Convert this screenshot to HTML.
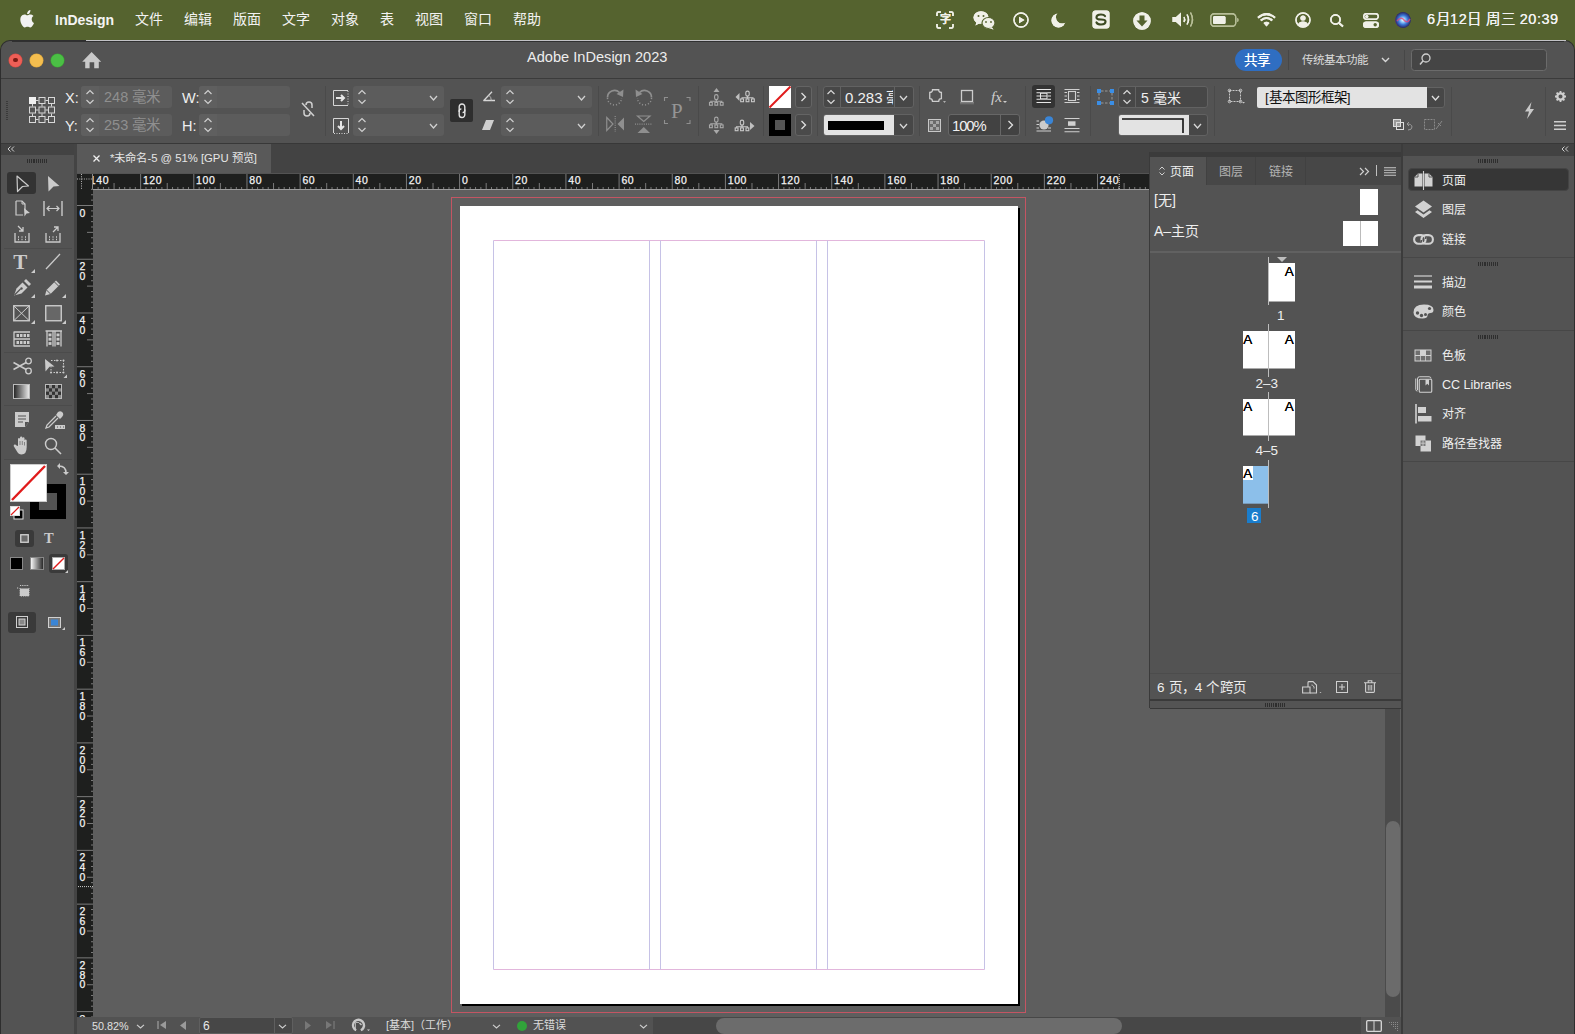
<!DOCTYPE html><html lang="zh-CN"><head><meta charset="utf-8"><style>
*{margin:0;padding:0;box-sizing:border-box}
html,body{width:1575px;height:1034px;overflow:hidden;background:#55632f;font-family:"Liberation Sans",sans-serif;color:#e8e8e8}
svg{overflow:visible}
</style></head><body>
<div style="position:absolute;left:0px;top:0px;width:1575px;height:41px;background:#55632f"></div>
<svg style="position:absolute;left:20px;top:10px;" width="15" height="17" viewBox="0 0 15 17"><path d="M12.3 9.1c0-2.2 1.8-3.3 1.9-3.3-1-1.5-2.6-1.7-3.2-1.7-1.4-.1-2.7.8-3.3.8-.7 0-1.7-.8-2.9-.8C3.3 4.1 1.9 5 1.1 6.4c-1.6 2.8-.4 6.9 1.1 9.1.8 1.1 1.7 2.3 2.8 2.3 1.1 0 1.6-.7 2.9-.7 1.3 0 1.7.7 2.9.7 1.2 0 2-1.1 2.7-2.2.9-1.2 1.2-2.4 1.2-2.5 0 0-2.4-.9-2.4-3.9zM10.1 2.5c.6-.8 1-1.8.9-2.9-.9 0-2 .6-2.6 1.4-.6.7-1.1 1.7-.9 2.8 1 .1 2-.5 2.6-1.3z" fill="#f2f2f2" transform="translate(0,0.5) scale(0.95)"/></svg>
<div style="position:absolute;left:55px;top:13px;font-size:14px;line-height:14px;color:#f4f4f4;font-weight:bold;white-space:nowrap;">InDesign</div>
<div style="position:absolute;left:135px;top:12px;font-size:14px;line-height:14px;color:#f2f2f2;font-weight:normal;white-space:nowrap;">文件</div>
<div style="position:absolute;left:184px;top:12px;font-size:14px;line-height:14px;color:#f2f2f2;font-weight:normal;white-space:nowrap;">编辑</div>
<div style="position:absolute;left:233px;top:12px;font-size:14px;line-height:14px;color:#f2f2f2;font-weight:normal;white-space:nowrap;">版面</div>
<div style="position:absolute;left:282px;top:12px;font-size:14px;line-height:14px;color:#f2f2f2;font-weight:normal;white-space:nowrap;">文字</div>
<div style="position:absolute;left:331px;top:12px;font-size:14px;line-height:14px;color:#f2f2f2;font-weight:normal;white-space:nowrap;">对象</div>
<div style="position:absolute;left:380px;top:12px;font-size:14px;line-height:14px;color:#f2f2f2;font-weight:normal;white-space:nowrap;">表</div>
<div style="position:absolute;left:415px;top:12px;font-size:14px;line-height:14px;color:#f2f2f2;font-weight:normal;white-space:nowrap;">视图</div>
<div style="position:absolute;left:464px;top:12px;font-size:14px;line-height:14px;color:#f2f2f2;font-weight:normal;white-space:nowrap;">窗口</div>
<div style="position:absolute;left:513px;top:12px;font-size:14px;line-height:14px;color:#f2f2f2;font-weight:normal;white-space:nowrap;">帮助</div>
<div style="position:absolute;left:1427px;top:12px;font-size:14.5px;line-height:14.5px;color:#f2f2f2;font-weight:normal;white-space:nowrap;letter-spacing:0.5px">6月12日 周三 20:39</div>
<svg style="position:absolute;left:936px;top:11px;" width="18" height="18" viewBox="0 0 18 18"><path d="M1 5 V2.5 Q1 1 2.5 1 H5 M13 1 H15.5 Q17 1 17 2.5 V5 M17 13 V15.5 Q17 17 15.5 17 H13 M5 17 H2.5 Q1 17 1 15.5 V13" stroke="#f0f0e8" stroke-width="1.5" fill="none"/></svg>
<div style="position:absolute;left:939.5px;top:13.5px;font-size:11px;line-height:11px;color:#f0f0e8;font-weight:bold;white-space:nowrap;">字</div>
<svg style="position:absolute;left:973px;top:10px;" width="23" height="20" viewBox="0 0 23 20"><ellipse cx="8" cy="7.5" rx="7.5" ry="6.3" fill="#f0f0e8"/><path d="M3.5 12 L2.5 15.5 L7 13 Z" fill="#f0f0e8"/><ellipse cx="15.5" cy="13" rx="6.5" ry="5.5" fill="#f0f0e8" stroke="#55632f" stroke-width="1.2"/><path d="M18.5 17 L20.5 19.5 L15.5 18 Z" fill="#f0f0e8"/><circle cx="5.5" cy="6" r="1" fill="#55632f"/><circle cx="10.5" cy="6" r="1" fill="#55632f"/><circle cx="13" cy="12" r="0.9" fill="#55632f"/><circle cx="18" cy="12" r="0.9" fill="#55632f"/></svg>
<svg style="position:absolute;left:1013px;top:12px;" width="16" height="16" viewBox="0 0 16 16"><circle cx="8" cy="8" r="7" stroke="#f0f0e8" stroke-width="1.4" fill="none"/><path d="M6 4.8 L11.5 8 L6 11.2 Z" fill="#f0f0e8"/></svg>
<svg style="position:absolute;left:1051px;top:13px;" width="16" height="15" viewBox="0 0 16 15"><defs><mask id="mm"><rect x="-2" y="-2" width="20" height="20" fill="#fff"/><circle cx="11.2" cy="4.2" r="6.3" fill="#000"/></mask></defs><circle cx="7.5" cy="7.5" r="7" fill="#f0f0e8" mask="url(#mm)"/></svg>
<svg style="position:absolute;left:1092px;top:10px;" width="18" height="19" viewBox="0 0 18 19"><rect x="0.5" y="0.5" width="17" height="18" rx="3" fill="#f0f0e8"/><path d="M13 6 Q12 4.5 9 4.5 Q4.5 4.5 4.5 7.5 Q4.5 9.5 9 9.5 Q13.5 9.5 13.5 11.5 Q13.5 14.5 9 14.5 Q5.5 14.5 4.5 12.5" stroke="#3c4a22" stroke-width="2.2" fill="none" stroke-linecap="round"/></svg>
<svg style="position:absolute;left:1133px;top:12px;" width="18" height="18" viewBox="0 0 18 18"><circle cx="9" cy="9" r="8.7" fill="#f0f0e8"/><path d="M6.5 3.5 H11.5 V8.5 H14.5 L9 14.5 L3.5 8.5 H6.5 Z" fill="#55632f"/></svg>
<svg style="position:absolute;left:1172px;top:12px;" width="22" height="15" viewBox="0 0 22 15"><path d="M0.5 5 H4 L9 0.5 V14.5 L4 10 H0.5 Z" fill="#f0f0e8"/><path d="M12 5 Q13.5 7.5 12 10" stroke="#f0f0e8" stroke-width="1.4" fill="none"/><path d="M15 2.5 Q18 7.5 15 12.5" stroke="#f0f0e8" stroke-width="1.4" fill="none"/><path d="M18.5 0.5 Q22.5 7.5 18.5 14.5" stroke="#b9bf98" stroke-width="1.3" fill="none"/></svg>
<svg style="position:absolute;left:1210px;top:13px;" width="29" height="14" viewBox="0 0 29 14"><rect x="0.75" y="0.75" width="25" height="12.5" rx="3.5" stroke="#b7be98" stroke-width="1.3" fill="none"/><rect x="3" y="3" width="12.5" height="8" rx="1.5" fill="#f0f0e8"/><path d="M27.3 5 Q28.5 5 28.5 7 Q28.5 9 27.3 9 Z" fill="#b7be98"/></svg>
<svg style="position:absolute;left:1257px;top:13px;" width="19" height="14" viewBox="0 0 19 14"><path d="M9.5 13.5 L6.5 10 Q9.5 7.5 12.5 10 Z" fill="#f0f0e8"/><path d="M3.8 7.6 Q9.5 2.5 15.2 7.6" stroke="#f0f0e8" stroke-width="2" fill="none"/><path d="M1 4.7 Q9.5 -2.5 18 4.7" stroke="#f0f0e8" stroke-width="2" fill="none"/></svg>
<svg style="position:absolute;left:1295px;top:12px;" width="16" height="16" viewBox="0 0 16 16"><circle cx="8" cy="8" r="7" stroke="#f0f0e8" stroke-width="1.4" fill="none"/><circle cx="8" cy="6" r="2.6" fill="#f0f0e8"/><path d="M3 12.5 Q4 9.5 8 9.5 Q12 9.5 13 12.5 Q11 14.5 8 14.5 Q5 14.5 3 12.5 Z" fill="#f0f0e8"/></svg>
<svg style="position:absolute;left:1330px;top:14px;" width="14" height="13" viewBox="0 0 14 13"><circle cx="5.5" cy="5.5" r="4.6" stroke="#f0f0e8" stroke-width="1.6" fill="none"/><path d="M9 9 L13 12.5" stroke="#f0f0e8" stroke-width="1.8"/></svg>
<svg style="position:absolute;left:1363px;top:13px;" width="16" height="15" viewBox="0 0 16 15"><rect x="0.75" y="0.75" width="14.5" height="5.5" rx="2.75" stroke="#f0f0e8" stroke-width="1.3" fill="none"/><circle cx="3.8" cy="3.5" r="1.6" fill="#f0f0e8"/><rect x="0" y="8.5" width="16" height="6.5" rx="3.25" fill="#f0f0e8"/><circle cx="12.2" cy="11.75" r="1.7" fill="#55632f"/></svg>
<svg style="position:absolute;left:1395px;top:12px;" width="16" height="16" viewBox="0 0 16 16"><defs><radialGradient id="siri" cx="0.5" cy="0.5" r="0.5"><stop offset="0" stop-color="#ffffff"/><stop offset="0.25" stop-color="#9fd4ff"/><stop offset="0.6" stop-color="#3a78d8"/><stop offset="1" stop-color="#2a2a6a"/></radialGradient><radialGradient id="siri2" cx="0.2" cy="0.6" r="0.5"><stop offset="0" stop-color="#ff3a8a" stop-opacity="0.9"/><stop offset="1" stop-color="#ff3a8a" stop-opacity="0"/></radialGradient></defs><circle cx="8" cy="8" r="7.7" fill="url(#siri)"/><circle cx="8" cy="8" r="7.7" fill="url(#siri2)"/></svg>
<div style="position:absolute;left:1427px;top:12px;font-size:14.5px;line-height:14.5px;color:#f2f2f2;font-weight:normal;white-space:nowrap;letter-spacing:0.5px">6月12日 周三 20:39</div>
<svg style="position:absolute;left:936px;top:11px;" width="18" height="18" viewBox="0 0 18 18"><path d="M1 5 V2.5 Q1 1 2.5 1 H5 M13 1 H15.5 Q17 1 17 2.5 V5 M17 13 V15.5 Q17 17 15.5 17 H13 M5 17 H2.5 Q1 17 1 15.5 V13" stroke="#f0f0e8" stroke-width="1.5" fill="none"/></svg>
<div style="position:absolute;left:939.5px;top:13.5px;font-size:11px;line-height:11px;color:#f0f0e8;font-weight:bold;white-space:nowrap;">字</div>
<svg style="position:absolute;left:973px;top:10px;" width="23" height="20" viewBox="0 0 23 20"><ellipse cx="8" cy="7.5" rx="7.5" ry="6.3" fill="#f0f0e8"/><path d="M3.5 12 L2.5 15.5 L7 13 Z" fill="#f0f0e8"/><ellipse cx="15.5" cy="13" rx="6.5" ry="5.5" fill="#f0f0e8" stroke="#55632f" stroke-width="1.2"/><path d="M18.5 17 L20.5 19.5 L15.5 18 Z" fill="#f0f0e8"/><circle cx="5.5" cy="6" r="1" fill="#55632f"/><circle cx="10.5" cy="6" r="1" fill="#55632f"/><circle cx="13" cy="12" r="0.9" fill="#55632f"/><circle cx="18" cy="12" r="0.9" fill="#55632f"/></svg>
<svg style="position:absolute;left:1013px;top:12px;" width="16" height="16" viewBox="0 0 16 16"><circle cx="8" cy="8" r="7" stroke="#f0f0e8" stroke-width="1.4" fill="none"/><path d="M6 4.8 L11.5 8 L6 11.2 Z" fill="#f0f0e8"/></svg>
<svg style="position:absolute;left:1051px;top:13px;" width="16" height="15" viewBox="0 0 16 15"><defs><mask id="mm"><rect x="-2" y="-2" width="20" height="20" fill="#fff"/><circle cx="11.2" cy="4.2" r="6.3" fill="#000"/></mask></defs><circle cx="7.5" cy="7.5" r="7" fill="#f0f0e8" mask="url(#mm)"/></svg>
<svg style="position:absolute;left:1092px;top:10px;" width="18" height="19" viewBox="0 0 18 19"><rect x="0.5" y="0.5" width="17" height="18" rx="3" fill="#f0f0e8"/><path d="M13 6 Q12 4.5 9 4.5 Q4.5 4.5 4.5 7.5 Q4.5 9.5 9 9.5 Q13.5 9.5 13.5 11.5 Q13.5 14.5 9 14.5 Q5.5 14.5 4.5 12.5" stroke="#3c4a22" stroke-width="2.2" fill="none" stroke-linecap="round"/></svg>
<svg style="position:absolute;left:1133px;top:12px;" width="18" height="18" viewBox="0 0 18 18"><circle cx="9" cy="9" r="8.7" fill="#f0f0e8"/><path d="M6.5 3.5 H11.5 V8.5 H14.5 L9 14.5 L3.5 8.5 H6.5 Z" fill="#55632f"/></svg>
<svg style="position:absolute;left:1172px;top:12px;" width="22" height="15" viewBox="0 0 22 15"><path d="M0.5 5 H4 L9 0.5 V14.5 L4 10 H0.5 Z" fill="#f0f0e8"/><path d="M12 5 Q13.5 7.5 12 10" stroke="#f0f0e8" stroke-width="1.4" fill="none"/><path d="M15 2.5 Q18 7.5 15 12.5" stroke="#f0f0e8" stroke-width="1.4" fill="none"/><path d="M18.5 0.5 Q22.5 7.5 18.5 14.5" stroke="#b9bf98" stroke-width="1.3" fill="none"/></svg>
<svg style="position:absolute;left:1210px;top:13px;" width="29" height="14" viewBox="0 0 29 14"><rect x="0.75" y="0.75" width="25" height="12.5" rx="3.5" stroke="#b7be98" stroke-width="1.3" fill="none"/><rect x="3" y="3" width="12.5" height="8" rx="1.5" fill="#f0f0e8"/><path d="M27.3 5 Q28.5 5 28.5 7 Q28.5 9 27.3 9 Z" fill="#b7be98"/></svg>
<svg style="position:absolute;left:1257px;top:13px;" width="19" height="14" viewBox="0 0 19 14"><path d="M9.5 13.5 L6.5 10 Q9.5 7.5 12.5 10 Z" fill="#f0f0e8"/><path d="M3.8 7.6 Q9.5 2.5 15.2 7.6" stroke="#f0f0e8" stroke-width="2" fill="none"/><path d="M1 4.7 Q9.5 -2.5 18 4.7" stroke="#f0f0e8" stroke-width="2" fill="none"/></svg>
<svg style="position:absolute;left:1295px;top:12px;" width="16" height="16" viewBox="0 0 16 16"><circle cx="8" cy="8" r="7" stroke="#f0f0e8" stroke-width="1.4" fill="none"/><circle cx="8" cy="6" r="2.6" fill="#f0f0e8"/><path d="M3 12.5 Q4 9.5 8 9.5 Q12 9.5 13 12.5 Q11 14.5 8 14.5 Q5 14.5 3 12.5 Z" fill="#f0f0e8"/></svg>
<svg style="position:absolute;left:1330px;top:14px;" width="14" height="13" viewBox="0 0 14 13"><circle cx="5.5" cy="5.5" r="4.6" stroke="#f0f0e8" stroke-width="1.6" fill="none"/><path d="M9 9 L13 12.5" stroke="#f0f0e8" stroke-width="1.8"/></svg>
<svg style="position:absolute;left:1363px;top:13px;" width="16" height="15" viewBox="0 0 16 15"><rect x="0.75" y="0.75" width="14.5" height="5.5" rx="2.75" stroke="#f0f0e8" stroke-width="1.3" fill="none"/><circle cx="3.8" cy="3.5" r="1.6" fill="#f0f0e8"/><rect x="0" y="8.5" width="16" height="6.5" rx="3.25" fill="#f0f0e8"/><circle cx="12.2" cy="11.75" r="1.7" fill="#55632f"/></svg>
<svg style="position:absolute;left:1395px;top:12px;" width="16" height="16" viewBox="0 0 16 16"><defs><radialGradient id="siri" cx="0.55" cy="0.45" r="0.6"><stop offset="0" stop-color="#e8f0ff"/><stop offset="0.35" stop-color="#5a8de0"/><stop offset="0.7" stop-color="#8a3a9a"/><stop offset="1" stop-color="#3a2a5a"/></radialGradient></defs><circle cx="8" cy="8" r="7.7" fill="url(#siri)"/><path d="M2 9 Q6 4 9 8 Q12 12 15 7" stroke="#e04a7a" stroke-width="1.5" fill="none" opacity="0.8"/></svg>
<div style="position:absolute;left:1px;top:41px;width:1573px;height:993px;background:#535353;border-radius:9px 9px 0 0;box-shadow:0 0 0 1px #2e2e2e"></div>
<div style="position:absolute;left:86px;top:40px;width:1480px;height:1px;background:#c2c2c6"></div>
<div style="position:absolute;left:12px;top:41px;width:1552px;height:1px;background:#303030"></div>
<div style="position:absolute;left:1px;top:78px;width:1573px;height:2px;background:#3b3b3b"></div>
<div style="position:absolute;left:9.2px;top:53.5px;width:13px;height:13px;background:#ee5f57;border-radius:50%;box-shadow:0 0 0 0.5px #d24b43"></div>
<div style="position:absolute;left:30.0px;top:53.5px;width:13px;height:13px;background:#f4be4f;border-radius:50%;box-shadow:0 0 0 0.5px #d9a33a"></div>
<div style="position:absolute;left:50.5px;top:53.5px;width:13px;height:13px;background:#4bbf45;border-radius:50%;box-shadow:0 0 0 0.5px #3aa433"></div>
<div style="position:absolute;left:13.3px;top:57.6px;width:4.8px;height:4.8px;background:#7a1a14;border-radius:50%"></div>
<svg style="position:absolute;left:82px;top:51px;" width="20" height="18" viewBox="0 0 20 18"><path d="M9.6 1 L19.2 10.8 L16.8 10.8 L16.8 17.2 L12.2 17.2 L12.2 11.2 L7.6 11.2 L7.6 17.2 L3.2 17.2 L3.2 10.8 L0.2 10.8 Z" fill="#c9c9c9"/></svg>
<div style="position:absolute;left:527px;top:50px;font-size:14.6px;line-height:14.6px;color:#ededed;font-weight:normal;white-space:nowrap;">Adobe InDesign 2023</div>
<div style="position:absolute;left:1235px;top:49px;width:47px;height:22px;background:#2f6ec2;border-radius:11px"></div>
<div style="position:absolute;left:1244px;top:54px;font-size:13.5px;line-height:13.5px;color:#ffffff;font-weight:normal;white-space:nowrap;text-shadow:0 0 0.4px #fff">共享</div>
<div style="position:absolute;left:1288px;top:50px;width:1px;height:20px;background:#474747"></div>
<div style="position:absolute;left:1302px;top:55px;font-size:11.5px;line-height:11.5px;color:#dadada;font-weight:normal;white-space:nowrap;">传统基本功能</div>
<svg style="position:absolute;left:1381px;top:57px;" width="9" height="6" viewBox="0 0 9 6"><path d="M1 1 L4.5 4.5 L8 1" stroke="#d8d8d8" stroke-width="1.4" fill="none"/></svg>
<div style="position:absolute;left:1404px;top:50px;width:1px;height:20px;background:#474747"></div>
<div style="position:absolute;left:1411px;top:49px;width:136px;height:22px;background:#454545;border:1.5px solid #6b6b6b;border-radius:3.5px"></div>
<svg style="position:absolute;left:1419px;top:53px;" width="12" height="13" viewBox="0 0 12 13"><circle cx="7" cy="5" r="4" stroke="#cfcfcf" stroke-width="1.3" fill="none"/><path d="M4.2 7.8 L1 11.5" stroke="#cfcfcf" stroke-width="1.5"/></svg>
<div style="position:absolute;left:1px;top:79px;width:1573px;height:64px;background:#535353"></div>
<div style="position:absolute;left:1px;top:143px;width:1573px;height:1px;background:#383838"></div>
<div style="position:absolute;left:6px;top:100.5px;width:2px;height:1px;background:#3a3a3a"></div>
<div style="position:absolute;left:6px;top:102.5px;width:2px;height:1px;background:#3a3a3a"></div>
<div style="position:absolute;left:6px;top:104.5px;width:2px;height:1px;background:#3a3a3a"></div>
<div style="position:absolute;left:6px;top:106.5px;width:2px;height:1px;background:#3a3a3a"></div>
<div style="position:absolute;left:6px;top:108.5px;width:2px;height:1px;background:#3a3a3a"></div>
<div style="position:absolute;left:6px;top:110.5px;width:2px;height:1px;background:#3a3a3a"></div>
<div style="position:absolute;left:6px;top:112.5px;width:2px;height:1px;background:#3a3a3a"></div>
<div style="position:absolute;left:6px;top:114.5px;width:2px;height:1px;background:#3a3a3a"></div>
<div style="position:absolute;left:6px;top:116.5px;width:2px;height:1px;background:#3a3a3a"></div>
<div style="position:absolute;left:6px;top:118.5px;width:2px;height:1px;background:#3a3a3a"></div>
<svg style="position:absolute;left:28px;top:96px;" width="28" height="28" viewBox="0 0 28 28"><rect x="1.0" y="1.0" width="7" height="7" fill="#f0f0f0"/><rect x="11.0" y="1.5" width="6" height="6" fill="none" stroke="#d8d8d8" stroke-width="1"/><rect x="20.5" y="1.5" width="6" height="6" fill="none" stroke="#d8d8d8" stroke-width="1"/><rect x="1.5" y="11.0" width="6" height="6" fill="none" stroke="#d8d8d8" stroke-width="1"/><rect x="11.0" y="11.0" width="6" height="6" fill="none" stroke="#d8d8d8" stroke-width="1"/><rect x="20.5" y="11.0" width="6" height="6" fill="none" stroke="#d8d8d8" stroke-width="1"/><rect x="1.5" y="20.5" width="6" height="6" fill="none" stroke="#d8d8d8" stroke-width="1"/><rect x="11.0" y="20.5" width="6" height="6" fill="none" stroke="#d8d8d8" stroke-width="1"/><rect x="20.5" y="20.5" width="6" height="6" fill="none" stroke="#d8d8d8" stroke-width="1"/><path d="M8 4.5 L10.5 4.5 M17.5 4.5 L20 4.5" stroke="#d8d8d8"/><path d="M8 14.0 L10.5 14.0 M17.5 14.0 L20 14.0" stroke="#d8d8d8"/><path d="M8 23.5 L10.5 23.5 M17.5 23.5 L20 23.5" stroke="#d8d8d8"/><path d="M4.5 8 L4.5 10.5 M4.5 17.5 L4.5 20" stroke="#d8d8d8"/><path d="M14.0 8 L14.0 10.5 M14.0 17.5 L14.0 20" stroke="#d8d8d8"/><path d="M23.5 8 L23.5 10.5 M23.5 17.5 L23.5 20" stroke="#d8d8d8"/></svg>
<div style="position:absolute;left:65px;top:91px;font-size:14.5px;line-height:14.5px;color:#efefef;font-weight:normal;white-space:nowrap;">X:</div>
<div style="position:absolute;left:65px;top:119px;font-size:14.5px;line-height:14.5px;color:#efefef;font-weight:normal;white-space:nowrap;">Y:</div>
<div style="position:absolute;left:182px;top:91px;font-size:14.5px;line-height:14.5px;color:#efefef;font-weight:normal;white-space:nowrap;">W:</div>
<div style="position:absolute;left:182px;top:119px;font-size:14.5px;line-height:14.5px;color:#efefef;font-weight:normal;white-space:nowrap;">H:</div>
<div style="position:absolute;left:81px;top:86px;width:91px;height:22px;background:#5c5c5c;border-radius:3px"></div>
<div style="position:absolute;left:81px;top:86px;width:18px;height:22px;background:#5f5f5f;border-radius:3px 0 0 3px"></div>
<svg style="position:absolute;left:85px;top:88px;" width="10" height="18" viewBox="0 0 10 18"><path d="M1.5 6 L5 2.5 L8.5 6 M1.5 12 L5 15.5 L8.5 12" stroke="#cfcfcf" stroke-width="1.2" fill="none"/></svg>
<div style="position:absolute;left:81px;top:114px;width:91px;height:22px;background:#5c5c5c;border-radius:3px"></div>
<div style="position:absolute;left:81px;top:114px;width:18px;height:22px;background:#5f5f5f;border-radius:3px 0 0 3px"></div>
<svg style="position:absolute;left:85px;top:116px;" width="10" height="18" viewBox="0 0 10 18"><path d="M1.5 6 L5 2.5 L8.5 6 M1.5 12 L5 15.5 L8.5 12" stroke="#cfcfcf" stroke-width="1.2" fill="none"/></svg>
<div style="position:absolute;left:104px;top:90px;font-size:14.5px;line-height:14.5px;color:#8f8f8f;font-weight:normal;white-space:nowrap;">248 毫米</div>
<div style="position:absolute;left:104px;top:118px;font-size:14.5px;line-height:14.5px;color:#8f8f8f;font-weight:normal;white-space:nowrap;">253 毫米</div>
<div style="position:absolute;left:199px;top:86px;width:91px;height:22px;background:#5c5c5c;border-radius:3px"></div>
<div style="position:absolute;left:199px;top:86px;width:18px;height:22px;background:#5f5f5f;border-radius:3px 0 0 3px"></div>
<svg style="position:absolute;left:203px;top:88px;" width="10" height="18" viewBox="0 0 10 18"><path d="M1.5 6 L5 2.5 L8.5 6 M1.5 12 L5 15.5 L8.5 12" stroke="#cfcfcf" stroke-width="1.2" fill="none"/></svg>
<div style="position:absolute;left:199px;top:114px;width:91px;height:22px;background:#5c5c5c;border-radius:3px"></div>
<div style="position:absolute;left:199px;top:114px;width:18px;height:22px;background:#5f5f5f;border-radius:3px 0 0 3px"></div>
<svg style="position:absolute;left:203px;top:116px;" width="10" height="18" viewBox="0 0 10 18"><path d="M1.5 6 L5 2.5 L8.5 6 M1.5 12 L5 15.5 L8.5 12" stroke="#cfcfcf" stroke-width="1.2" fill="none"/></svg>
<svg style="position:absolute;left:301px;top:101px;" width="14" height="16" viewBox="0 0 14 16"><path d="M5 4 Q5 1 8 1 Q11 1 11 4 L11 7 M3 9 L3 12 Q3 15 6 15 Q9 15 9 12" stroke="#d0d0d0" stroke-width="1.5" fill="none"/><path d="M1 2 L13 15" stroke="#d0d0d0" stroke-width="1.5"/></svg>
<div style="position:absolute;left:325px;top:86px;width:1px;height:50px;background:#4a4a4a"></div>
<svg style="position:absolute;left:333px;top:90px;" width="16" height="16" viewBox="0 0 16 16"><path d="M0.5 0.5 H15 M0.5 0.5 V15.5 H15" stroke="#d6d6d6" fill="none"/><path d="M15 1 V15" stroke="#d6d6d6" stroke-dasharray="1 1.5"/><path d="M3 8 H10 M8 5 L11 8 L8 11" stroke="#e6e6e6" stroke-width="2" fill="none"/></svg>
<svg style="position:absolute;left:333px;top:118px;" width="16" height="16" viewBox="0 0 16 16"><path d="M0.5 15 V0.5 H15.5 V15 M0.5 15" stroke="#d6d6d6" fill="none"/><path d="M1 15.5 H15" stroke="#d6d6d6" stroke-dasharray="1 1.5"/><path d="M8 3 V10 M5 8 L8 11 L11 8" stroke="#e6e6e6" stroke-width="2" fill="none"/></svg>
<div style="position:absolute;left:353px;top:86px;width:91px;height:22px;background:#5c5c5c;border-radius:3px"></div>
<svg style="position:absolute;left:357px;top:88px;" width="10" height="18" viewBox="0 0 10 18"><path d="M1.5 6 L5 2.5 L8.5 6 M1.5 12 L5 15.5 L8.5 12" stroke="#cfcfcf" stroke-width="1.2" fill="none"/></svg>
<svg style="position:absolute;left:429px;top:95px;" width="9" height="6" viewBox="0 0 9 6"><path d="M1 1 L4.5 5 L8 1" stroke="#d0d0d0" stroke-width="1.3" fill="none"/></svg>
<div style="position:absolute;left:353px;top:114px;width:91px;height:22px;background:#5c5c5c;border-radius:3px"></div>
<svg style="position:absolute;left:357px;top:116px;" width="10" height="18" viewBox="0 0 10 18"><path d="M1.5 6 L5 2.5 L8.5 6 M1.5 12 L5 15.5 L8.5 12" stroke="#cfcfcf" stroke-width="1.2" fill="none"/></svg>
<svg style="position:absolute;left:429px;top:123px;" width="9" height="6" viewBox="0 0 9 6"><path d="M1 1 L4.5 5 L8 1" stroke="#d0d0d0" stroke-width="1.3" fill="none"/></svg>
<div style="position:absolute;left:450px;top:99px;width:23px;height:23px;background:#2e2e2e;border-radius:2px"></div>
<svg style="position:absolute;left:457.5px;top:103px;" width="9" height="16" viewBox="0 0 9 16"><path d="M1.2 9 V3.8 A2.8 2.8 0 0 1 6.8 3.8 V7.5 Q6.8 9.3 4.6 9.6" stroke="#e4e4e4" stroke-width="1.4" fill="none"/><path d="M6.8 6.5 V11.7 A2.8 2.8 0 0 1 1.2 11.7 V8 Q1.2 6.2 3.4 5.9" stroke="#e4e4e4" stroke-width="1.4" fill="none"/></svg>
<svg style="position:absolute;left:483px;top:91px;" width="13" height="11" viewBox="0 0 13 11"><path d="M9 0.8 L0.8 9.5 H12" stroke="#d6d6d6" stroke-width="1.3" fill="none" stroke-linejoin="round"/><path d="M5.8 4.2 Q8.3 6 8.3 9.5" stroke="#bdbdbd" stroke-width="0.9" fill="none"/></svg>
<svg style="position:absolute;left:482px;top:120px;" width="12" height="10" viewBox="0 0 12 10"><path d="M4 0 L12 0 L8 10 L0 10 Z" fill="#cfcfcf"/></svg>
<div style="position:absolute;left:501px;top:86px;width:91px;height:22px;background:#5c5c5c;border-radius:3px"></div>
<svg style="position:absolute;left:505px;top:88px;" width="10" height="18" viewBox="0 0 10 18"><path d="M1.5 6 L5 2.5 L8.5 6 M1.5 12 L5 15.5 L8.5 12" stroke="#cfcfcf" stroke-width="1.2" fill="none"/></svg>
<svg style="position:absolute;left:577px;top:95px;" width="9" height="6" viewBox="0 0 9 6"><path d="M1 1 L4.5 5 L8 1" stroke="#d0d0d0" stroke-width="1.3" fill="none"/></svg>
<div style="position:absolute;left:501px;top:114px;width:91px;height:22px;background:#5c5c5c;border-radius:3px"></div>
<svg style="position:absolute;left:505px;top:116px;" width="10" height="18" viewBox="0 0 10 18"><path d="M1.5 6 L5 2.5 L8.5 6 M1.5 12 L5 15.5 L8.5 12" stroke="#cfcfcf" stroke-width="1.2" fill="none"/></svg>
<svg style="position:absolute;left:577px;top:123px;" width="9" height="6" viewBox="0 0 9 6"><path d="M1 1 L4.5 5 L8 1" stroke="#d0d0d0" stroke-width="1.3" fill="none"/></svg>
<div style="position:absolute;left:598px;top:86px;width:1px;height:50px;background:#4a4a4a"></div>
<svg style="position:absolute;left:606px;top:88px;" width="18" height="17" viewBox="0 0 18 17"><path d="M1.5 9.5 A7 7 0 0 1 13.5 4.5" stroke="#8f8f8f" stroke-width="1.7" fill="none"/><path d="M1.5 10 A7 7 0 0 0 15.5 10" stroke="#8f8f8f" stroke-width="1.5" fill="none" stroke-dasharray="1.1 2"/><path d="M17.5 1.5 L17 9 L10.5 6 Z" fill="#8f8f8f"/></svg>
<svg style="position:absolute;left:635px;top:88px;" width="18" height="17" viewBox="0 0 18 17"><path d="M16.5 9.5 A7 7 0 0 0 4.5 4.5" stroke="#8f8f8f" stroke-width="1.7" fill="none"/><path d="M16.5 10 A7 7 0 0 1 2.5 10" stroke="#8f8f8f" stroke-width="1.5" fill="none" stroke-dasharray="1.1 2"/><path d="M0.5 1.5 L1 9 L7.5 6 Z" fill="#8f8f8f"/></svg>
<svg style="position:absolute;left:606px;top:116px;" width="19" height="16" viewBox="0 0 19 16"><path d="M0.75 1.5 L7 8 L0.75 14.5 Z" stroke="#8f8f8f" stroke-width="1.2" fill="none"/><path d="M18 1.5 L11.5 8 L18 14.5 Z" fill="#8f8f8f"/><path d="M9.2 0 V16" stroke="#8f8f8f" stroke-width="1.2" stroke-dasharray="1 1.2"/></svg>
<svg style="position:absolute;left:635px;top:115px;" width="17" height="19" viewBox="0 0 17 19"><path d="M2.5 1 H15 L8.75 6.5 Z" stroke="#8f8f8f" stroke-width="1.2" fill="none"/><path d="M2.5 18 H15 L8.75 12 Z" fill="#8f8f8f"/><path d="M0 9.2 H17" stroke="#8f8f8f" stroke-width="1.2" stroke-dasharray="1 1.2"/></svg>
<svg style="position:absolute;left:664px;top:97px;" width="27" height="27" viewBox="0 0 27 27"><path d="M0.5 4 V0.5 H4 M22.5 0.5 H26 V4 M0.5 23 V26.5 H4 M22.5 26.5 H26 V23" stroke="#8f8f8f" stroke-width="1.1" fill="none"/></svg>
<div style="position:absolute;left:671px;top:101px;font-size:21px;line-height:21px;color:#959595;font-weight:normal;white-space:nowrap;font-family:'Liberation Serif',serif">P</div>
<div style="position:absolute;left:698px;top:86px;width:1px;height:50px;background:#4a4a4a"></div>
<svg style="position:absolute;left:709px;top:87px;" width="15" height="19" viewBox="0 0 15 19"><path d="M4.5 5 L7.5 1 L10.5 5 Z" fill="#a9a9a9"/><rect x="5.6" y="7.6" width="3.4" height="5" rx="1.7" stroke="#a9a9a9" stroke-width="1.1" fill="none"/><path d="M7.3 12.6 V14.3 M1.8 15.3 V14.3 H12.8 V15.3 M7.3 14.3 V15.3" stroke="#a9a9a9" stroke-width="1.1" fill="none"/><rect x="0.5" y="15.4" width="2.8" height="2.8" stroke="#a9a9a9" stroke-width="1.1" fill="none"/><rect x="5.8999999999999995" y="15.4" width="2.8" height="2.8" stroke="#a9a9a9" stroke-width="1.1" fill="none"/><rect x="11.3" y="15.4" width="2.8" height="2.8" stroke="#a9a9a9" stroke-width="1.1" fill="none"/></svg>
<svg style="position:absolute;left:735px;top:90px;" width="20" height="13" viewBox="0 0 20 13"><path d="M4.5 3 L0.5 7 L4.5 11 Z" fill="#c0c0c0"/><rect x="10.8" y="1.1" width="3.4" height="5" rx="1.7" stroke="#c8c8c8" stroke-width="1.1" fill="none"/><path d="M12.5 6.1 V7.8 M7.0 8.8 V7.8 H18.0 V8.8 M12.5 7.8 V8.8" stroke="#c8c8c8" stroke-width="1.1" fill="none"/><rect x="5.7" y="8.9" width="2.8" height="2.8" stroke="#c8c8c8" stroke-width="1.1" fill="none"/><rect x="11.1" y="8.9" width="2.8" height="2.8" stroke="#c8c8c8" stroke-width="1.1" fill="none"/><rect x="16.5" y="8.9" width="2.8" height="2.8" stroke="#c8c8c8" stroke-width="1.1" fill="none"/></svg>
<svg style="position:absolute;left:709px;top:116px;" width="15" height="19" viewBox="0 0 15 19"><rect x="5.6" y="1.1" width="3.4" height="5" rx="1.7" stroke="#a9a9a9" stroke-width="1.1" fill="none"/><path d="M7.3 6.1 V7.8 M1.8 8.8 V7.8 H12.8 V8.8 M7.3 7.8 V8.8" stroke="#a9a9a9" stroke-width="1.1" fill="none"/><rect x="0.5" y="8.9" width="2.8" height="2.8" stroke="#a9a9a9" stroke-width="1.1" fill="none"/><rect x="5.8999999999999995" y="8.9" width="2.8" height="2.8" stroke="#a9a9a9" stroke-width="1.1" fill="none"/><rect x="11.3" y="8.9" width="2.8" height="2.8" stroke="#a9a9a9" stroke-width="1.1" fill="none"/><path d="M4.5 14 L7.5 18 L10.5 14 Z" fill="#a9a9a9"/></svg>
<svg style="position:absolute;left:735px;top:119px;" width="20" height="13" viewBox="0 0 20 13"><rect x="5.3" y="1.1" width="3.4" height="5" rx="1.7" stroke="#c8c8c8" stroke-width="1.1" fill="none"/><path d="M7 6.1 V7.8 M1.5 8.8 V7.8 H12.5 V8.8 M7 7.8 V8.8" stroke="#c8c8c8" stroke-width="1.1" fill="none"/><rect x="0.2" y="8.9" width="2.8" height="2.8" stroke="#c8c8c8" stroke-width="1.1" fill="none"/><rect x="5.6" y="8.9" width="2.8" height="2.8" stroke="#c8c8c8" stroke-width="1.1" fill="none"/><rect x="11" y="8.9" width="2.8" height="2.8" stroke="#c8c8c8" stroke-width="1.1" fill="none"/><path d="M15 3 L19.5 7 L15 11 Z" fill="#c0c0c0"/></svg>
<div style="position:absolute;left:763px;top:86px;width:1px;height:50px;background:#4a4a4a"></div>
<svg style="position:absolute;left:769px;top:86px;" width="22" height="22" viewBox="0 0 22 22"><rect x="0" y="0" width="22" height="22" fill="#ffffff"/><path d="M0.5 21.5 L21.5 0.5" stroke="#e01b1b" stroke-width="2"/></svg>
<div style="position:absolute;left:795px;top:86px;width:17px;height:22px;background:#4a4a4a;border:1px solid #646464;border-radius:3px"></div>
<svg style="position:absolute;left:800px;top:92px;" width="7" height="10" viewBox="0 0 7 10"><path d="M1.5 1 L5.5 5 L1.5 9" stroke="#e0e0e0" stroke-width="1.3" fill="none"/></svg>
<svg style="position:absolute;left:769px;top:114px;" width="22" height="22" viewBox="0 0 22 22"><rect x="0" y="0" width="22" height="22" fill="#000"/><rect x="6" y="6" width="10" height="10" fill="#555"/></svg>
<div style="position:absolute;left:795px;top:114px;width:17px;height:22px;background:#4a4a4a;border:1px solid #646464;border-radius:3px"></div>
<svg style="position:absolute;left:800px;top:120px;" width="7" height="10" viewBox="0 0 7 10"><path d="M1.5 1 L5.5 5 L1.5 9" stroke="#e0e0e0" stroke-width="1.3" fill="none"/></svg>
<div style="position:absolute;left:817px;top:86px;width:1px;height:50px;background:#4a4a4a"></div>
<div style="position:absolute;left:823px;top:86px;width:91px;height:22px;background:#474747;border:1px solid #626262;border-radius:3px"></div>
<div style="position:absolute;left:840px;top:87px;width:1px;height:20px;background:#626262"></div>
<div style="position:absolute;left:894px;top:87px;width:1px;height:20px;background:#626262"></div>
<svg style="position:absolute;left:826px;top:88px;" width="10" height="18" viewBox="0 0 10 18"><path d="M1.5 6 L5 2.5 L8.5 6 M1.5 12 L5 15.5 L8.5 12" stroke="#d8d8d8" stroke-width="1.2" fill="none"/></svg>
<div style="position:absolute;left:845px;top:90px;font-size:15px;line-height:15px;color:#f0f0f0;font-weight:normal;white-space:nowrap;width:48px;overflow:hidden">0.283<span style='margin-left:3px'>毫</span></div>
<svg style="position:absolute;left:899px;top:95px;" width="9" height="6" viewBox="0 0 9 6"><path d="M1 1 L4.5 5 L8 1" stroke="#d8d8d8" stroke-width="1.3" fill="none"/></svg>
<div style="position:absolute;left:823px;top:114px;width:91px;height:22px;background:#474747;border:1px solid #626262;border-radius:3px"></div>
<div style="position:absolute;left:824px;top:115px;width:70px;height:20px;background:#e3e3e3;border-radius:2px 0 0 2px"></div>
<div style="position:absolute;left:828px;top:121px;width:56px;height:9px;background:#000"></div>
<svg style="position:absolute;left:899px;top:123px;" width="9" height="6" viewBox="0 0 9 6"><path d="M1 1 L4.5 5 L8 1" stroke="#d8d8d8" stroke-width="1.3" fill="none"/></svg>
<div style="position:absolute;left:919px;top:86px;width:1px;height:50px;background:#4a4a4a"></div>
<svg style="position:absolute;left:929px;top:89px;" width="18" height="15" viewBox="0 0 18 15"><path d="M3.5 0.75 H9.7 Q9.7 3.5 12.4 3.5 V9.7 Q9.7 9.7 9.7 12.4 H3.5 Q3.5 9.7 0.75 9.7 V3.5 Q3.5 3.5 3.5 0.75 Z" stroke="#cdcdcd" stroke-width="1.3" fill="none"/><path d="M14 12.3 L17 12.3 L15.5 13.8 Z" fill="#cdcdcd"/></svg>
<svg style="position:absolute;left:960px;top:89px;" width="14" height="17" viewBox="0 0 14 17"><defs><linearGradient id="shd" x1="0" y1="0" x2="0" y2="1"><stop offset="0" stop-color="#888"/><stop offset="1" stop-color="#535353"/></linearGradient></defs><rect x="1.5" y="1.5" width="11" height="11" stroke="#cdcdcd" stroke-width="1.3" fill="none"/><rect x="0" y="13" width="14" height="3" fill="url(#shd)"/></svg>
<div style="position:absolute;left:991px;top:88.5px;font-size:15.5px;line-height:15.5px;color:#cdcdcd;font-weight:normal;white-space:nowrap;font-family:'Liberation Serif',serif"><i>fx</i></div>
<svg style="position:absolute;left:1003px;top:101px;" width="4" height="3" viewBox="0 0 4 3"><path d="M0 0 L4 0 L2 2 Z" fill="#cdcdcd"/></svg>
<svg style="position:absolute;left:928px;top:118.5px;" width="13" height="13" viewBox="0 0 13 13"><rect x="0.5" y="0.5" width="12" height="12" stroke="#c8c8c8" fill="#6a6a6a"/><rect x="2" y="2" width="3" height="3" fill="#a5a5a5"/><rect x="8" y="2" width="3" height="3" fill="#a5a5a5"/><rect x="5" y="5" width="3" height="3" fill="#a5a5a5"/><rect x="2" y="8" width="3" height="3" fill="#a5a5a5"/><rect x="8" y="8" width="3" height="3" fill="#a5a5a5"/></svg>
<div style="position:absolute;left:947.5px;top:114px;width:72px;height:22px;background:#424242;border:1px solid #676767;border-radius:3px"></div>
<div style="position:absolute;left:1000px;top:115px;width:1px;height:20px;background:#676767"></div>
<div style="position:absolute;left:952px;top:118.5px;font-size:14.8px;line-height:14.8px;color:#f0f0f0;font-weight:normal;white-space:nowrap;letter-spacing:-1.1px">100%</div>
<svg style="position:absolute;left:1007px;top:120px;" width="7" height="10" viewBox="0 0 7 10"><path d="M1.5 1 L5.5 5 L1.5 9" stroke="#e0e0e0" stroke-width="1.3" fill="none"/></svg>
<div style="position:absolute;left:1025px;top:86px;width:1px;height:50px;background:#4a4a4a"></div>
<div style="position:absolute;left:1032px;top:85px;width:23px;height:23px;background:#333;border-radius:3px"></div>
<svg style="position:absolute;left:1036px;top:88px;" width="16" height="17" viewBox="0 0 16 17"><path d="M0.5 1.5 H15 M0.5 4.8 H15 M0.5 8 H15 M0.5 11.3 H15 M0.5 14.5 H15" stroke="#e6e6e6" stroke-width="1.1"/><rect x="4" y="4.8" width="7.5" height="6.5" fill="#333"/><rect x="4.5" y="5.3" width="6.5" height="5.5" fill="none" stroke="#e6e6e6" stroke-width="1"/><path d="M4.5 8 H11" stroke="#e6e6e6"/></svg>
<svg style="position:absolute;left:1064px;top:88px;" width="16" height="17" viewBox="0 0 16 17"><path d="M0.5 1.5 H15.5 M0.5 14.5 H15.5" stroke="#d0d0d0" stroke-width="1.1"/><path d="M0.5 4.5 H3 M0.5 8 H3 M0.5 11.5 H3 M13 4.5 H15.5 M13 8 H15.5 M13 11.5 H15.5" stroke="#d0d0d0" stroke-width="1.1"/><rect x="4.5" y="3.5" width="7" height="9" fill="none" stroke="#d0d0d0" stroke-width="1.1"/></svg>
<svg style="position:absolute;left:1036px;top:115px;" width="18" height="18" viewBox="0 0 18 18"><path d="M0.5 16 H15 M0.5 6 H3 M0.5 9.5 H3 M0.5 13 H3 M12 13 H15" stroke="#d0d0d0" stroke-width="1.1"/><circle cx="8" cy="10" r="4.6" fill="#cbcbcb"/><circle cx="13" cy="5.3" r="4.1" fill="#3a85d6"/></svg>
<svg style="position:absolute;left:1064px;top:117px;" width="16" height="16" viewBox="0 0 16 16"><path d="M0.5 1.5 H15.5 M0.5 11.5 H15.5 M0.5 14.8 H15.5" stroke="#d0d0d0" stroke-width="1.1"/><rect x="4" y="4.3" width="7.5" height="4.5" fill="#d0d0d0"/></svg>
<div style="position:absolute;left:1090px;top:86px;width:1px;height:50px;background:#4a4a4a"></div>
<svg style="position:absolute;left:1097px;top:89px;" width="17" height="16" viewBox="0 0 17 16"><rect x="0" y="0" width="4" height="4" fill="#3a8ee6"/><rect x="13" y="0" width="4" height="4" fill="#3a8ee6"/><rect x="0" y="12" width="4" height="4" fill="#3a8ee6"/><rect x="13" y="12" width="4" height="4" fill="#3a8ee6"/><path d="M4 2 H13 M4 14 H13 M2 4 V12 M15 4 V12" stroke="#9a9a9a" stroke-dasharray="2.5 1.5"/></svg>
<div style="position:absolute;left:1118px;top:86px;width:90px;height:22px;background:#474747;border:1px solid #626262;border-radius:3px"></div>
<div style="position:absolute;left:1135px;top:87px;width:1px;height:20px;background:#626262"></div>
<svg style="position:absolute;left:1122px;top:88px;" width="10" height="18" viewBox="0 0 10 18"><path d="M1.5 6 L5 2.5 L8.5 6 M1.5 12 L5 15.5 L8.5 12" stroke="#d8d8d8" stroke-width="1.2" fill="none"/></svg>
<div style="position:absolute;left:1141px;top:90.5px;font-size:14px;line-height:14px;color:#f0f0f0;font-weight:normal;white-space:nowrap;">5 毫米</div>
<div style="position:absolute;left:1118px;top:114px;width:90px;height:22px;background:#474747;border:1px solid #626262;border-radius:3px"></div>
<div style="position:absolute;left:1119px;top:115px;width:70px;height:20px;background:#e3e3e3;border-radius:2px 0 0 2px"></div>
<svg style="position:absolute;left:1121px;top:117px;" width="60" height="17" viewBox="0 0 60 17"><path d="M1 2 H62 V16" stroke="#111" stroke-width="1.6" fill="none"/></svg>
<svg style="position:absolute;left:1193px;top:123px;" width="9" height="6" viewBox="0 0 9 6"><path d="M1 1 L4.5 5 L8 1" stroke="#d8d8d8" stroke-width="1.3" fill="none"/></svg>
<div style="position:absolute;left:1214px;top:86px;width:1px;height:50px;background:#4a4a4a"></div>
<svg style="position:absolute;left:1228px;top:89px;" width="17" height="15" viewBox="0 0 17 15"><rect x="1.5" y="1.5" width="11" height="11" fill="none" stroke="#c9c9c9" stroke-dasharray="2 1"/><circle cx="1.5" cy="1.5" r="1.3" fill="none" stroke="#c9c9c9"/><circle cx="12.5" cy="1.5" r="1.3" fill="none" stroke="#c9c9c9"/><circle cx="1.5" cy="12.5" r="1.3" fill="none" stroke="#c9c9c9"/><circle cx="12.5" cy="12.5" r="1.3" fill="none" stroke="#c9c9c9"/><path d="M14 13 L17 13 L15.5 14.5 Z" fill="#c9c9c9"/></svg>
<div style="position:absolute;left:1257px;top:87px;width:188px;height:21px;background:#474747;border:1px solid #626262;border-radius:3px"></div>
<div style="position:absolute;left:1257px;top:87px;width:170px;height:21px;background:#e3e3e3;border-radius:2px 0 0 2px"></div>
<div style="position:absolute;left:1265px;top:91px;font-size:13.5px;line-height:13.5px;color:#111;font-weight:normal;white-space:nowrap;">[基本图形框架]</div>
<svg style="position:absolute;left:1431px;top:95px;" width="9" height="6" viewBox="0 0 9 6"><path d="M1 1 L4.5 5 L8 1" stroke="#e0e0e0" stroke-width="1.3" fill="none"/></svg>
<svg style="position:absolute;left:1393px;top:119px;" width="22" height="12" viewBox="0 0 22 12"><rect x="0.5" y="0.5" width="7" height="7" fill="#9a9a9a" stroke="#ddd"/><rect x="3.5" y="3.5" width="7" height="7" fill="none" stroke="#ddd"/><path d="M14 5 Q19 5 19 8 Q19 11 15 11 M14 5 L16 3 M14 5 L16 7" stroke="#9a9a9a" fill="none"/></svg>
<svg style="position:absolute;left:1424px;top:119px;" width="19" height="12" viewBox="0 0 19 12"><rect x="0.5" y="0.5" width="10" height="10" fill="none" stroke="#8a8a8a" stroke-dasharray="2 1"/><path d="M12 10 L18 2 M14 4 L17 7" stroke="#8a8a8a"/></svg>
<div style="position:absolute;left:1451px;top:87px;width:1px;height:49px;background:#4a4a4a"></div>
<svg style="position:absolute;left:1524px;top:102px;" width="11" height="17" viewBox="0 0 11 17"><path d="M7.5 0 L1 9.5 L5 9.5 L3 17 L10 7 L6 7 Z" fill="#c9c9c9"/></svg>
<div style="position:absolute;left:1545px;top:87px;width:1px;height:49px;background:#4a4a4a"></div>
<svg style="position:absolute;left:1555px;top:91px;" width="11" height="11" viewBox="0 0 11 11"><circle cx="5.5" cy="5.5" r="3.2" fill="none" stroke="#cfcfcf" stroke-width="2.3"/><path d="M5.5 0 V2 M5.5 9 V11 M0 5.5 H2 M9 5.5 H11 M1.6 1.6 L3 3 M8 8 L9.4 9.4 M1.6 9.4 L3 8 M8 3 L9.4 1.6" stroke="#cfcfcf" stroke-width="1.8"/></svg>
<svg style="position:absolute;left:1554px;top:121px;" width="12" height="9" viewBox="0 0 12 9"><path d="M0 0.75 H12 M0 4.5 H12 M0 8.25 H12" stroke="#cfcfcf" stroke-width="1.3"/></svg>
<div style="position:absolute;left:1px;top:144px;width:73px;height:890px;background:#535353"></div>
<div style="position:absolute;left:1px;top:144px;width:73px;height:11px;background:#434343"></div>
<div style="position:absolute;left:74px;top:144px;width:3px;height:890px;background:#444444"></div>
<svg style="position:absolute;left:7px;top:146px;" width="8" height="6" viewBox="0 0 8 6"><path d="M3.5 0.5 L1 3 L3.5 5.5 M7 0.5 L4.5 3 L7 5.5" stroke="#cfcfcf" fill="none"/></svg>
<div style="position:absolute;left:27.0px;top:159px;width:1px;height:4px;background:#2e2e2e"></div>
<div style="position:absolute;left:28.85px;top:159px;width:1px;height:4px;background:#2e2e2e"></div>
<div style="position:absolute;left:30.7px;top:159px;width:1px;height:4px;background:#2e2e2e"></div>
<div style="position:absolute;left:32.55px;top:159px;width:1px;height:4px;background:#2e2e2e"></div>
<div style="position:absolute;left:34.4px;top:159px;width:1px;height:4px;background:#2e2e2e"></div>
<div style="position:absolute;left:36.25px;top:159px;width:1px;height:4px;background:#2e2e2e"></div>
<div style="position:absolute;left:38.1px;top:159px;width:1px;height:4px;background:#2e2e2e"></div>
<div style="position:absolute;left:39.95px;top:159px;width:1px;height:4px;background:#2e2e2e"></div>
<div style="position:absolute;left:41.8px;top:159px;width:1px;height:4px;background:#2e2e2e"></div>
<div style="position:absolute;left:43.650000000000006px;top:159px;width:1px;height:4px;background:#2e2e2e"></div>
<div style="position:absolute;left:45.5px;top:159px;width:1px;height:4px;background:#2e2e2e"></div>
<div style="position:absolute;left:7px;top:172px;width:29px;height:22px;background:#333;border-radius:3px"></div>
<svg style="position:absolute;left:16px;top:175px;" width="14" height="18" viewBox="0 0 14 18"><path d="M1 1 L12.5 11 L6.5 11.5 L1.5 16.5 Z" stroke="#cbcbcb" stroke-width="1.2" fill="none" stroke-linejoin="round"/></svg>
<svg style="position:absolute;left:47px;top:175px;" width="14" height="18" viewBox="0 0 14 18"><path d="M1 1 L12.5 11 L6.5 11.5 L1.5 16.5 Z" fill="#cbcbcb"/></svg>
<svg style="position:absolute;left:15px;top:200px;" width="16" height="17" viewBox="0 0 16 17"><path d="M1 1 H7 L10 4 V10 M1 1 V15 H8" stroke="#cbcbcb" stroke-width="1.2" fill="none"/><path d="M7 1 V4 H10" stroke="#cbcbcb" fill="none"/><path d="M9 8 L15 13 L11.5 13.5 L9.5 16.5 Z" fill="#cbcbcb"/></svg>
<svg style="position:absolute;left:43px;top:201px;" width="20" height="15" viewBox="0 0 20 15"><path d="M1 0 V15 M19 0 V15" stroke="#cbcbcb" stroke-width="1.4"/><path d="M4 7.5 H16 M6.5 5 L4 7.5 L6.5 10 M13.5 5 L16 7.5 L13.5 10" stroke="#cbcbcb" stroke-width="1.2" fill="none"/></svg>
<svg style="position:absolute;left:14px;top:225px;" width="16" height="18" viewBox="0 0 16 18"><path d="M1 8 V17 H15 V8" stroke="#cbcbcb" stroke-width="1.3" fill="none"/><path d="M4 12 H5 M7.5 12 H8.5 M11 12 H12 M4 14.5 H5 M7.5 14.5 H8.5 M11 14.5 H12" stroke="#cbcbcb" stroke-width="1.3"/><path d="M4 1 L9 6 M9 2 V6 H5" stroke="#cbcbcb" stroke-width="1.3" fill="none"/></svg>
<svg style="position:absolute;left:45px;top:225px;" width="16" height="18" viewBox="0 0 16 18"><path d="M1 8 V17 H15 V8" stroke="#cbcbcb" stroke-width="1.3" fill="none"/><path d="M4 12 H5 M7.5 12 H8.5 M11 12 H12 M4 14.5 H5 M7.5 14.5 H8.5 M11 14.5 H12" stroke="#cbcbcb" stroke-width="1.3"/><path d="M8 7 L13 2 M9 2 H13 V6" stroke="#cbcbcb" stroke-width="1.3" fill="none"/></svg>
<div style="position:absolute;left:4px;top:248px;width:68px;height:1px;background:#4b4b4b"></div>
<div style="position:absolute;left:13.2px;top:251.5px;font-size:21px;line-height:21px;color:#cbcbcb;font-weight:bold;white-space:nowrap;font-family:'Liberation Serif',serif">T</div>
<svg style="position:absolute;left:31px;top:269px;" width="4" height="4" viewBox="0 0 4 4"><path d="M4 0 V4 H0 Z" fill="#cbcbcb"/></svg>
<svg style="position:absolute;left:45px;top:253px;" width="16" height="17" viewBox="0 0 16 17"><path d="M1 16 L15 1" stroke="#cbcbcb" stroke-width="1.3"/></svg>
<svg style="position:absolute;left:13px;top:279px;" width="23" height="19" viewBox="0 0 23 19"><path d="M1 16.5 L3.5 9.5 L9.5 3.5 L14.5 8.5 L8.5 14.5 Z" fill="#cbcbcb"/><path d="M11 2 L13 0 L18 5 L16 7 Z" fill="#cbcbcb"/><path d="M1.5 16 L7.5 10" stroke="#535353" stroke-width="1.2"/><circle cx="8.5" cy="9.5" r="1.2" fill="#535353"/><path d="M22 15 V19 H18 Z" fill="#cbcbcb"/></svg>
<svg style="position:absolute;left:44px;top:279px;" width="23" height="19" viewBox="0 0 23 19"><path d="M1 16.5 L2.5 11 L12 1.5 L16 5.5 L6.5 15 Z" fill="#cbcbcb"/><path d="M2.5 11 L6.5 15" stroke="#535353"/><path d="M10.5 3 L14.5 7" stroke="#535353"/><path d="M22 15 V19 H18 Z" fill="#cbcbcb"/></svg>
<svg style="position:absolute;left:13px;top:305px;" width="23" height="20" viewBox="0 0 23 20"><rect x="0.75" y="0.75" width="15.5" height="15" fill="none" stroke="#cbcbcb" stroke-width="1.4"/><path d="M1 1 L16 15.5 M16 1 L1 15.5" stroke="#cbcbcb" stroke-width="1"/><path d="M22 15 V19 H18 Z" fill="#cbcbcb"/></svg>
<svg style="position:absolute;left:45px;top:305px;" width="22" height="20" viewBox="0 0 22 20"><rect x="0.75" y="0.75" width="15.5" height="15" fill="#676767" stroke="#cbcbcb" stroke-width="1.4"/><path d="M21 15 V19 H17 Z" fill="#cbcbcb"/></svg>
<svg style="position:absolute;left:13px;top:330.5px;" width="18" height="16" viewBox="0 0 18 16"><path d="M1 1 H17 M1 8 H17 M1 15 H17 M1 0.5 V15.5" stroke="#cbcbcb" stroke-width="1.3"/><rect x="3.5" y="3" width="2.5" height="3" fill="#cbcbcb"/><rect x="3.5" y="10" width="2.5" height="3" fill="#cbcbcb"/><rect x="7.0" y="3" width="2.5" height="3" fill="#cbcbcb"/><rect x="7.0" y="10" width="2.5" height="3" fill="#cbcbcb"/><rect x="10.5" y="3" width="2.5" height="3" fill="#cbcbcb"/><rect x="10.5" y="10" width="2.5" height="3" fill="#cbcbcb"/><rect x="14.0" y="3" width="2.5" height="3" fill="#cbcbcb"/><rect x="14.0" y="10" width="2.5" height="3" fill="#cbcbcb"/></svg>
<svg style="position:absolute;left:44.5px;top:330px;" width="18" height="17" viewBox="0 0 18 17"><path d="M0.5 1 H17 M2 1 V16.5 M8 1 V16.5 M10 1 V16.5 M16 1 V16.5" stroke="#cbcbcb" stroke-width="1.3"/><rect x="3.5" y="3.5" width="3" height="2.8" fill="#cbcbcb"/><rect x="11.5" y="3.5" width="3" height="2.8" fill="#cbcbcb"/><rect x="3.5" y="7.8" width="3" height="2.8" fill="#cbcbcb"/><rect x="11.5" y="7.8" width="3" height="2.8" fill="#cbcbcb"/><rect x="3.5" y="12.1" width="3" height="2.8" fill="#cbcbcb"/><rect x="11.5" y="12.1" width="3" height="2.8" fill="#cbcbcb"/></svg>
<div style="position:absolute;left:4px;top:351.5px;width:68px;height:1px;background:#4b4b4b"></div>
<svg style="position:absolute;left:12.5px;top:357px;" width="19" height="18" viewBox="0 0 19 18"><circle cx="15.5" cy="4" r="2.8" fill="none" stroke="#cbcbcb" stroke-width="1.3"/><circle cx="15.5" cy="14" r="2.8" fill="none" stroke="#cbcbcb" stroke-width="1.3"/><path d="M13.2 5.5 L0.5 12.5 M13.2 12.5 L0.5 5.5" stroke="#cbcbcb" stroke-width="1.6"/></svg>
<svg style="position:absolute;left:43.5px;top:358px;" width="23" height="20" viewBox="0 0 23 20"><path d="M1 1 L10.5 8.5 L5.5 8.8 L1.5 13.5 Z" fill="#cbcbcb"/><path d="M7 2.5 H19.5 V14.5 H7 V9" stroke="#cbcbcb" stroke-dasharray="1.5 1.5" fill="none"/><circle cx="19.5" cy="2.5" r="1" fill="#cbcbcb"/><circle cx="19.5" cy="14.5" r="1" fill="#cbcbcb"/><circle cx="7" cy="14.5" r="1" fill="#cbcbcb"/><circle cx="13" cy="2.5" r="1" fill="#cbcbcb"/><circle cx="13" cy="14.5" r="1" fill="#cbcbcb"/><circle cx="19.5" cy="8.5" r="1" fill="#cbcbcb"/><path d="M23 16.5 V20 H19.5 Z" fill="#cbcbcb"/></svg>
<svg style="position:absolute;left:13px;top:384px;" width="17" height="15" viewBox="0 0 17 15"><defs><linearGradient id="gr1"><stop offset="0" stop-color="#222"/><stop offset="1" stop-color="#eee"/></linearGradient></defs><rect x="0.5" y="0.5" width="16" height="14" fill="url(#gr1)" stroke="#bbb"/></svg>
<svg style="position:absolute;left:45px;top:384px;" width="17" height="15" viewBox="0 0 17 15"><rect x="0.5" y="0.5" width="16" height="14" fill="#8a8a8a" stroke="#bbb"/><rect x="1" y="1.0" width="3" height="3.3" fill="#333"/><rect x="7" y="1.0" width="3" height="3.3" fill="#333"/><rect x="13" y="1.0" width="3" height="3.3" fill="#333"/><rect x="4" y="4.3" width="3" height="3.3" fill="#333"/><rect x="10" y="4.3" width="3" height="3.3" fill="#333"/><rect x="1" y="7.6" width="3" height="3.3" fill="#333"/><rect x="7" y="7.6" width="3" height="3.3" fill="#333"/><rect x="13" y="7.6" width="3" height="3.3" fill="#333"/><rect x="4" y="10.899999999999999" width="3" height="3.3" fill="#333"/><rect x="10" y="10.899999999999999" width="3" height="3.3" fill="#333"/></svg>
<div style="position:absolute;left:4px;top:405px;width:68px;height:1px;background:#4b4b4b"></div>
<svg style="position:absolute;left:14px;top:411px;" width="16" height="17" viewBox="0 0 16 17"><path d="M1 1 H15 V11 L11 16 H1 Z" fill="#cbcbcb"/><path d="M4 5 H12 M4 8 H12 M4 11 H9" stroke="#535353" stroke-width="1.2"/><path d="M11 16 V11 H15" fill="#535353"/></svg>
<svg style="position:absolute;left:44px;top:411px;" width="22" height="20" viewBox="0 0 22 20"><path d="M14 1 Q17 -1 19 2 Q20 4 18 6 L16 8 L12 4 Z" fill="#cbcbcb"/><path d="M12 5 L3 14 L2 17 L5 16 L14 7" stroke="#cbcbcb" stroke-width="1.3" fill="none"/><rect x="11" y="14" width="10" height="4" fill="#cbcbcb"/><path d="M13 16 H14 M16 16 H17 M19 16 H20" stroke="#535353"/></svg>
<svg style="position:absolute;left:13px;top:436px;" width="18" height="19" viewBox="0 0 18 19"><path d="M5 10 V3.2 Q5 2 6 2 Q7 2 7 3.2 V9 V1.7 Q7 0.5 8.2 0.5 Q9.3 0.5 9.3 1.7 V9 V2.3 Q9.3 1.2 10.4 1.2 Q11.5 1.2 11.5 2.3 V9.5 V4.5 Q11.5 3.4 12.6 3.4 Q13.7 3.4 13.7 4.5 V11 Q13.7 18.5 8.5 18.5 Q5.5 18.5 4 15.5 L0.8 10.3 Q0.3 9 1.5 8.6 Q2.7 8.3 3.5 9.5 Z" fill="#cbcbcb"/><path d="M7 9 V5 M9.3 9 V5 M11.5 9.5 V6" stroke="#535353" stroke-width="0.6"/></svg>
<svg style="position:absolute;left:44px;top:437px;" width="18" height="18" viewBox="0 0 18 18"><circle cx="7" cy="7" r="5.5" fill="none" stroke="#cbcbcb" stroke-width="1.4"/><path d="M11 11 L17 17" stroke="#cbcbcb" stroke-width="1.6"/></svg>
<div style="position:absolute;left:4px;top:459px;width:68px;height:1px;background:#4b4b4b"></div>
<svg style="position:absolute;left:30px;top:484px;" width="36" height="35" viewBox="0 0 36 35"><rect x="0" y="0" width="36" height="35" fill="#000"/><rect x="9" y="9" width="18" height="17" fill="#535353"/></svg>
<svg style="position:absolute;left:10px;top:464px;" width="37" height="38" viewBox="0 0 37 38"><rect x="0.5" y="0.5" width="36" height="37" fill="#fff" stroke="#ccc"/><path d="M2 36 L35 2" stroke="#e01b1b" stroke-width="2.4"/></svg>
<svg style="position:absolute;left:57px;top:465px;" width="12" height="12" viewBox="0 0 12 12"><path d="M2 1 Q9 1 9 8" stroke="#cbcbcb" stroke-width="1.6" fill="none"/><path d="M0 1 L3 -2 L3 4 Z M9 10 L6 7 L12 7 Z" fill="#cbcbcb"/></svg>
<svg style="position:absolute;left:10px;top:506px;" width="14" height="13" viewBox="0 0 14 13"><rect x="4" y="4" width="9" height="9" fill="#000" stroke="#ddd"/><rect x="0.5" y="0.5" width="9" height="9" fill="#fff" stroke="#ddd"/><path d="M1 9 L9 1" stroke="#e01b1b" stroke-width="1.2"/></svg>
<div style="position:absolute;left:15px;top:530px;width:19px;height:17px;background:#3a3a3a;border-radius:3px"></div>
<svg style="position:absolute;left:20px;top:534px;" width="9" height="9" viewBox="0 0 9 9"><rect x="0.75" y="0.75" width="7.5" height="7.5" fill="#6a6a6a" stroke="#d4d4d4" stroke-width="1.3"/></svg>
<div style="position:absolute;left:44px;top:531px;font-size:14.5px;line-height:14.5px;color:#cbcbcb;font-weight:bold;white-space:nowrap;font-family:'Liberation Serif',serif">T</div>
<svg style="position:absolute;left:10px;top:557px;" width="13" height="13" viewBox="0 0 13 13"><rect x="0.5" y="0.5" width="12" height="12" fill="#000" stroke="#888"/></svg>
<svg style="position:absolute;left:30px;top:557px;" width="14" height="13" viewBox="0 0 14 13"><defs><linearGradient id="gr2"><stop offset="0" stop-color="#fff"/><stop offset="1" stop-color="#222"/></linearGradient></defs><rect x="0.5" y="0.5" width="13" height="12" fill="url(#gr2)" stroke="#888"/></svg>
<div style="position:absolute;left:49px;top:554px;width:19px;height:19px;background:#3a3a3a;border-radius:3px"></div>
<svg style="position:absolute;left:52px;top:557px;" width="13" height="13" viewBox="0 0 13 13"><rect x="0.5" y="0.5" width="12" height="12" fill="#fff" stroke="#aaa"/><path d="M1 12 L12 1" stroke="#e01b1b" stroke-width="1.4"/></svg>
<svg style="position:absolute;left:65px;top:570px;" width="3" height="3" viewBox="0 0 3 3"><path d="M3 0 V3 H0 Z" fill="#cbcbcb"/></svg>
<svg style="position:absolute;left:16px;top:585px;" width="14" height="12" viewBox="0 0 14 12"><path d="M4 0.5 H13 M1 3 H3 M4 3 V11 H13 V3" stroke="#cbcbcb" stroke-dasharray="1.2 1" fill="none"/><rect x="4" y="3.5" width="9" height="7.5" fill="#cbcbcb"/></svg>
<div style="position:absolute;left:8px;top:612px;width:28px;height:21px;background:#3a3a3a;border-radius:3px"></div>
<svg style="position:absolute;left:16px;top:616px;" width="12" height="12" viewBox="0 0 12 12"><rect x="0.5" y="0.5" width="11" height="11" fill="none" stroke="#d0d0d0"/><rect x="3" y="3" width="6" height="6" fill="#888" stroke="#d0d0d0"/></svg>
<svg style="position:absolute;left:48px;top:617px;" width="13" height="11" viewBox="0 0 13 11"><rect x="0.5" y="0.5" width="12" height="10" fill="#777" stroke="#d0d0d0"/><rect x="3" y="2.5" width="7" height="6" fill="#3a85d6"/></svg>
<svg style="position:absolute;left:62px;top:627px;" width="3" height="3" viewBox="0 0 3 3"><path d="M3 0 V3 H0 Z" fill="#cbcbcb"/></svg>
<div style="position:absolute;left:77px;top:144px;width:1325px;height:29px;background:#434343"></div>
<div style="position:absolute;left:77px;top:144px;width:194px;height:29px;background:#595959"></div>
<svg style="position:absolute;left:92.5px;top:154.5px;" width="7" height="7" viewBox="0 0 7 7"><path d="M0.5 0.5 L6.5 6.5 M6.5 0.5 L0.5 6.5" stroke="#efefef" stroke-width="1.3"/></svg>
<div style="position:absolute;left:110px;top:153px;font-size:11.3px;line-height:11.3px;color:#e6e6e6;font-weight:normal;white-space:nowrap;">*未命名-5 @ 51% [GPU 预览]</div>
<div style="position:absolute;left:93px;top:190px;width:1309px;height:827px;background:#5e5e5e"></div>
<svg style="position:absolute;left:77px;top:174px;" width="1073" height="16" viewBox="0 0 1073 16"><rect x="0" y="0" width="1073" height="15" fill="#1e1f1e"/><rect x="0" y="15" width="1073" height="1" fill="#9c9c9c"/><rect x="20.61" y="13" width="1" height="2" fill="#7a7a7a"/><rect x="25.93" y="13" width="1" height="2" fill="#7a7a7a"/><rect x="31.24" y="13" width="1" height="2" fill="#7a7a7a"/><rect x="36.56" y="9" width="1" height="6" fill="#7a7a7a"/><rect x="41.88" y="13" width="1" height="2" fill="#7a7a7a"/><rect x="47.19" y="13" width="1" height="2" fill="#7a7a7a"/><rect x="52.51" y="13" width="1" height="2" fill="#7a7a7a"/><rect x="57.82" y="13" width="1" height="2" fill="#7a7a7a"/><rect x="63.14" y="0" width="1" height="15" fill="#7a7a7a"/><rect x="68.46" y="13" width="1" height="2" fill="#7a7a7a"/><rect x="73.77" y="13" width="1" height="2" fill="#7a7a7a"/><rect x="79.09" y="13" width="1" height="2" fill="#7a7a7a"/><rect x="84.40" y="13" width="1" height="2" fill="#7a7a7a"/><rect x="89.72" y="9" width="1" height="6" fill="#7a7a7a"/><rect x="95.04" y="13" width="1" height="2" fill="#7a7a7a"/><rect x="100.35" y="13" width="1" height="2" fill="#7a7a7a"/><rect x="105.67" y="13" width="1" height="2" fill="#7a7a7a"/><rect x="110.98" y="13" width="1" height="2" fill="#7a7a7a"/><rect x="116.30" y="0" width="1" height="15" fill="#7a7a7a"/><rect x="121.62" y="13" width="1" height="2" fill="#7a7a7a"/><rect x="126.93" y="13" width="1" height="2" fill="#7a7a7a"/><rect x="132.25" y="13" width="1" height="2" fill="#7a7a7a"/><rect x="137.56" y="13" width="1" height="2" fill="#7a7a7a"/><rect x="142.88" y="9" width="1" height="6" fill="#7a7a7a"/><rect x="148.20" y="13" width="1" height="2" fill="#7a7a7a"/><rect x="153.51" y="13" width="1" height="2" fill="#7a7a7a"/><rect x="158.83" y="13" width="1" height="2" fill="#7a7a7a"/><rect x="164.14" y="13" width="1" height="2" fill="#7a7a7a"/><rect x="169.46" y="0" width="1" height="15" fill="#7a7a7a"/><rect x="174.78" y="13" width="1" height="2" fill="#7a7a7a"/><rect x="180.09" y="13" width="1" height="2" fill="#7a7a7a"/><rect x="185.41" y="13" width="1" height="2" fill="#7a7a7a"/><rect x="190.72" y="13" width="1" height="2" fill="#7a7a7a"/><rect x="196.04" y="9" width="1" height="6" fill="#7a7a7a"/><rect x="201.36" y="13" width="1" height="2" fill="#7a7a7a"/><rect x="206.67" y="13" width="1" height="2" fill="#7a7a7a"/><rect x="211.99" y="13" width="1" height="2" fill="#7a7a7a"/><rect x="217.30" y="13" width="1" height="2" fill="#7a7a7a"/><rect x="222.62" y="0" width="1" height="15" fill="#7a7a7a"/><rect x="227.94" y="13" width="1" height="2" fill="#7a7a7a"/><rect x="233.25" y="13" width="1" height="2" fill="#7a7a7a"/><rect x="238.57" y="13" width="1" height="2" fill="#7a7a7a"/><rect x="243.88" y="13" width="1" height="2" fill="#7a7a7a"/><rect x="249.20" y="9" width="1" height="6" fill="#7a7a7a"/><rect x="254.52" y="13" width="1" height="2" fill="#7a7a7a"/><rect x="259.83" y="13" width="1" height="2" fill="#7a7a7a"/><rect x="265.15" y="13" width="1" height="2" fill="#7a7a7a"/><rect x="270.46" y="13" width="1" height="2" fill="#7a7a7a"/><rect x="275.78" y="0" width="1" height="15" fill="#7a7a7a"/><rect x="281.10" y="13" width="1" height="2" fill="#7a7a7a"/><rect x="286.41" y="13" width="1" height="2" fill="#7a7a7a"/><rect x="291.73" y="13" width="1" height="2" fill="#7a7a7a"/><rect x="297.04" y="13" width="1" height="2" fill="#7a7a7a"/><rect x="302.36" y="9" width="1" height="6" fill="#7a7a7a"/><rect x="307.68" y="13" width="1" height="2" fill="#7a7a7a"/><rect x="312.99" y="13" width="1" height="2" fill="#7a7a7a"/><rect x="318.31" y="13" width="1" height="2" fill="#7a7a7a"/><rect x="323.62" y="13" width="1" height="2" fill="#7a7a7a"/><rect x="328.94" y="0" width="1" height="15" fill="#7a7a7a"/><rect x="334.26" y="13" width="1" height="2" fill="#7a7a7a"/><rect x="339.57" y="13" width="1" height="2" fill="#7a7a7a"/><rect x="344.89" y="13" width="1" height="2" fill="#7a7a7a"/><rect x="350.20" y="13" width="1" height="2" fill="#7a7a7a"/><rect x="355.52" y="9" width="1" height="6" fill="#7a7a7a"/><rect x="360.84" y="13" width="1" height="2" fill="#7a7a7a"/><rect x="366.15" y="13" width="1" height="2" fill="#7a7a7a"/><rect x="371.47" y="13" width="1" height="2" fill="#7a7a7a"/><rect x="376.78" y="13" width="1" height="2" fill="#7a7a7a"/><rect x="382.10" y="0" width="1" height="15" fill="#7a7a7a"/><rect x="387.42" y="13" width="1" height="2" fill="#7a7a7a"/><rect x="392.73" y="13" width="1" height="2" fill="#7a7a7a"/><rect x="398.05" y="13" width="1" height="2" fill="#7a7a7a"/><rect x="403.36" y="13" width="1" height="2" fill="#7a7a7a"/><rect x="408.68" y="9" width="1" height="6" fill="#7a7a7a"/><rect x="414.00" y="13" width="1" height="2" fill="#7a7a7a"/><rect x="419.31" y="13" width="1" height="2" fill="#7a7a7a"/><rect x="424.63" y="13" width="1" height="2" fill="#7a7a7a"/><rect x="429.94" y="13" width="1" height="2" fill="#7a7a7a"/><rect x="435.26" y="0" width="1" height="15" fill="#7a7a7a"/><rect x="440.58" y="13" width="1" height="2" fill="#7a7a7a"/><rect x="445.89" y="13" width="1" height="2" fill="#7a7a7a"/><rect x="451.21" y="13" width="1" height="2" fill="#7a7a7a"/><rect x="456.52" y="13" width="1" height="2" fill="#7a7a7a"/><rect x="461.84" y="9" width="1" height="6" fill="#7a7a7a"/><rect x="467.16" y="13" width="1" height="2" fill="#7a7a7a"/><rect x="472.47" y="13" width="1" height="2" fill="#7a7a7a"/><rect x="477.79" y="13" width="1" height="2" fill="#7a7a7a"/><rect x="483.10" y="13" width="1" height="2" fill="#7a7a7a"/><rect x="488.42" y="0" width="1" height="15" fill="#7a7a7a"/><rect x="493.74" y="13" width="1" height="2" fill="#7a7a7a"/><rect x="499.05" y="13" width="1" height="2" fill="#7a7a7a"/><rect x="504.37" y="13" width="1" height="2" fill="#7a7a7a"/><rect x="509.68" y="13" width="1" height="2" fill="#7a7a7a"/><rect x="515.00" y="9" width="1" height="6" fill="#7a7a7a"/><rect x="520.32" y="13" width="1" height="2" fill="#7a7a7a"/><rect x="525.63" y="13" width="1" height="2" fill="#7a7a7a"/><rect x="530.95" y="13" width="1" height="2" fill="#7a7a7a"/><rect x="536.26" y="13" width="1" height="2" fill="#7a7a7a"/><rect x="541.58" y="0" width="1" height="15" fill="#7a7a7a"/><rect x="546.90" y="13" width="1" height="2" fill="#7a7a7a"/><rect x="552.21" y="13" width="1" height="2" fill="#7a7a7a"/><rect x="557.53" y="13" width="1" height="2" fill="#7a7a7a"/><rect x="562.84" y="13" width="1" height="2" fill="#7a7a7a"/><rect x="568.16" y="9" width="1" height="6" fill="#7a7a7a"/><rect x="573.48" y="13" width="1" height="2" fill="#7a7a7a"/><rect x="578.79" y="13" width="1" height="2" fill="#7a7a7a"/><rect x="584.11" y="13" width="1" height="2" fill="#7a7a7a"/><rect x="589.42" y="13" width="1" height="2" fill="#7a7a7a"/><rect x="594.74" y="0" width="1" height="15" fill="#7a7a7a"/><rect x="600.06" y="13" width="1" height="2" fill="#7a7a7a"/><rect x="605.37" y="13" width="1" height="2" fill="#7a7a7a"/><rect x="610.69" y="13" width="1" height="2" fill="#7a7a7a"/><rect x="616.00" y="13" width="1" height="2" fill="#7a7a7a"/><rect x="621.32" y="9" width="1" height="6" fill="#7a7a7a"/><rect x="626.64" y="13" width="1" height="2" fill="#7a7a7a"/><rect x="631.95" y="13" width="1" height="2" fill="#7a7a7a"/><rect x="637.27" y="13" width="1" height="2" fill="#7a7a7a"/><rect x="642.58" y="13" width="1" height="2" fill="#7a7a7a"/><rect x="647.90" y="0" width="1" height="15" fill="#7a7a7a"/><rect x="653.22" y="13" width="1" height="2" fill="#7a7a7a"/><rect x="658.53" y="13" width="1" height="2" fill="#7a7a7a"/><rect x="663.85" y="13" width="1" height="2" fill="#7a7a7a"/><rect x="669.16" y="13" width="1" height="2" fill="#7a7a7a"/><rect x="674.48" y="9" width="1" height="6" fill="#7a7a7a"/><rect x="679.80" y="13" width="1" height="2" fill="#7a7a7a"/><rect x="685.11" y="13" width="1" height="2" fill="#7a7a7a"/><rect x="690.43" y="13" width="1" height="2" fill="#7a7a7a"/><rect x="695.74" y="13" width="1" height="2" fill="#7a7a7a"/><rect x="701.06" y="0" width="1" height="15" fill="#7a7a7a"/><rect x="706.38" y="13" width="1" height="2" fill="#7a7a7a"/><rect x="711.69" y="13" width="1" height="2" fill="#7a7a7a"/><rect x="717.01" y="13" width="1" height="2" fill="#7a7a7a"/><rect x="722.32" y="13" width="1" height="2" fill="#7a7a7a"/><rect x="727.64" y="9" width="1" height="6" fill="#7a7a7a"/><rect x="732.96" y="13" width="1" height="2" fill="#7a7a7a"/><rect x="738.27" y="13" width="1" height="2" fill="#7a7a7a"/><rect x="743.59" y="13" width="1" height="2" fill="#7a7a7a"/><rect x="748.90" y="13" width="1" height="2" fill="#7a7a7a"/><rect x="754.22" y="0" width="1" height="15" fill="#7a7a7a"/><rect x="759.54" y="13" width="1" height="2" fill="#7a7a7a"/><rect x="764.85" y="13" width="1" height="2" fill="#7a7a7a"/><rect x="770.17" y="13" width="1" height="2" fill="#7a7a7a"/><rect x="775.48" y="13" width="1" height="2" fill="#7a7a7a"/><rect x="780.80" y="9" width="1" height="6" fill="#7a7a7a"/><rect x="786.12" y="13" width="1" height="2" fill="#7a7a7a"/><rect x="791.43" y="13" width="1" height="2" fill="#7a7a7a"/><rect x="796.75" y="13" width="1" height="2" fill="#7a7a7a"/><rect x="802.06" y="13" width="1" height="2" fill="#7a7a7a"/><rect x="807.38" y="0" width="1" height="15" fill="#7a7a7a"/><rect x="812.70" y="13" width="1" height="2" fill="#7a7a7a"/><rect x="818.01" y="13" width="1" height="2" fill="#7a7a7a"/><rect x="823.33" y="13" width="1" height="2" fill="#7a7a7a"/><rect x="828.64" y="13" width="1" height="2" fill="#7a7a7a"/><rect x="833.96" y="9" width="1" height="6" fill="#7a7a7a"/><rect x="839.28" y="13" width="1" height="2" fill="#7a7a7a"/><rect x="844.59" y="13" width="1" height="2" fill="#7a7a7a"/><rect x="849.91" y="13" width="1" height="2" fill="#7a7a7a"/><rect x="855.22" y="13" width="1" height="2" fill="#7a7a7a"/><rect x="860.54" y="0" width="1" height="15" fill="#7a7a7a"/><rect x="865.86" y="13" width="1" height="2" fill="#7a7a7a"/><rect x="871.17" y="13" width="1" height="2" fill="#7a7a7a"/><rect x="876.49" y="13" width="1" height="2" fill="#7a7a7a"/><rect x="881.80" y="13" width="1" height="2" fill="#7a7a7a"/><rect x="887.12" y="9" width="1" height="6" fill="#7a7a7a"/><rect x="892.44" y="13" width="1" height="2" fill="#7a7a7a"/><rect x="897.75" y="13" width="1" height="2" fill="#7a7a7a"/><rect x="903.07" y="13" width="1" height="2" fill="#7a7a7a"/><rect x="908.38" y="13" width="1" height="2" fill="#7a7a7a"/><rect x="913.70" y="0" width="1" height="15" fill="#7a7a7a"/><rect x="919.02" y="13" width="1" height="2" fill="#7a7a7a"/><rect x="924.33" y="13" width="1" height="2" fill="#7a7a7a"/><rect x="929.65" y="13" width="1" height="2" fill="#7a7a7a"/><rect x="934.96" y="13" width="1" height="2" fill="#7a7a7a"/><rect x="940.28" y="9" width="1" height="6" fill="#7a7a7a"/><rect x="945.60" y="13" width="1" height="2" fill="#7a7a7a"/><rect x="950.91" y="13" width="1" height="2" fill="#7a7a7a"/><rect x="956.23" y="13" width="1" height="2" fill="#7a7a7a"/><rect x="961.54" y="13" width="1" height="2" fill="#7a7a7a"/><rect x="966.86" y="0" width="1" height="15" fill="#7a7a7a"/><rect x="972.18" y="13" width="1" height="2" fill="#7a7a7a"/><rect x="977.49" y="13" width="1" height="2" fill="#7a7a7a"/><rect x="982.81" y="13" width="1" height="2" fill="#7a7a7a"/><rect x="988.12" y="13" width="1" height="2" fill="#7a7a7a"/><rect x="993.44" y="9" width="1" height="6" fill="#7a7a7a"/><rect x="998.76" y="13" width="1" height="2" fill="#7a7a7a"/><rect x="1004.07" y="13" width="1" height="2" fill="#7a7a7a"/><rect x="1009.39" y="13" width="1" height="2" fill="#7a7a7a"/><rect x="1014.70" y="13" width="1" height="2" fill="#7a7a7a"/><rect x="1020.02" y="0" width="1" height="15" fill="#7a7a7a"/><rect x="1025.34" y="13" width="1" height="2" fill="#7a7a7a"/><rect x="1030.65" y="13" width="1" height="2" fill="#7a7a7a"/><rect x="1035.97" y="13" width="1" height="2" fill="#7a7a7a"/><rect x="1041.28" y="13" width="1" height="2" fill="#7a7a7a"/><rect x="1046.60" y="9" width="1" height="6" fill="#7a7a7a"/><rect x="1051.92" y="13" width="1" height="2" fill="#7a7a7a"/><rect x="1057.23" y="13" width="1" height="2" fill="#7a7a7a"/><rect x="1062.55" y="13" width="1" height="2" fill="#7a7a7a"/><rect x="1067.86" y="13" width="1" height="2" fill="#7a7a7a"/><path d="M1042.2 0 V16" stroke="#cfcfcf" stroke-dasharray="1 1"/></svg>
<div style="position:absolute;left:89.8px;top:175.3px;font-size:10.5px;line-height:10px;letter-spacing:0.6px;color:#f4f4f4;white-space:nowrap;font-weight:normal;-webkit-text-stroke:0.25px #f4f4f4">140</div>
<div style="position:absolute;left:142.9px;top:175.3px;font-size:10.5px;line-height:10px;letter-spacing:0.6px;color:#f4f4f4;white-space:nowrap;font-weight:normal;-webkit-text-stroke:0.25px #f4f4f4">120</div>
<div style="position:absolute;left:196.1px;top:175.3px;font-size:10.5px;line-height:10px;letter-spacing:0.6px;color:#f4f4f4;white-space:nowrap;font-weight:normal;-webkit-text-stroke:0.25px #f4f4f4">100</div>
<div style="position:absolute;left:249.3px;top:175.3px;font-size:10.5px;line-height:10px;letter-spacing:0.6px;color:#f4f4f4;white-space:nowrap;font-weight:normal;-webkit-text-stroke:0.25px #f4f4f4">80</div>
<div style="position:absolute;left:302.4px;top:175.3px;font-size:10.5px;line-height:10px;letter-spacing:0.6px;color:#f4f4f4;white-space:nowrap;font-weight:normal;-webkit-text-stroke:0.25px #f4f4f4">60</div>
<div style="position:absolute;left:355.6px;top:175.3px;font-size:10.5px;line-height:10px;letter-spacing:0.6px;color:#f4f4f4;white-space:nowrap;font-weight:normal;-webkit-text-stroke:0.25px #f4f4f4">40</div>
<div style="position:absolute;left:408.7px;top:175.3px;font-size:10.5px;line-height:10px;letter-spacing:0.6px;color:#f4f4f4;white-space:nowrap;font-weight:normal;-webkit-text-stroke:0.25px #f4f4f4">20</div>
<div style="position:absolute;left:461.9px;top:175.3px;font-size:10.5px;line-height:10px;letter-spacing:0.6px;color:#f4f4f4;white-space:nowrap;font-weight:normal;-webkit-text-stroke:0.25px #f4f4f4">0</div>
<div style="position:absolute;left:515.1px;top:175.3px;font-size:10.5px;line-height:10px;letter-spacing:0.6px;color:#f4f4f4;white-space:nowrap;font-weight:normal;-webkit-text-stroke:0.25px #f4f4f4">20</div>
<div style="position:absolute;left:568.2px;top:175.3px;font-size:10.5px;line-height:10px;letter-spacing:0.6px;color:#f4f4f4;white-space:nowrap;font-weight:normal;-webkit-text-stroke:0.25px #f4f4f4">40</div>
<div style="position:absolute;left:621.4px;top:175.3px;font-size:10.5px;line-height:10px;letter-spacing:0.6px;color:#f4f4f4;white-space:nowrap;font-weight:normal;-webkit-text-stroke:0.25px #f4f4f4">60</div>
<div style="position:absolute;left:674.5px;top:175.3px;font-size:10.5px;line-height:10px;letter-spacing:0.6px;color:#f4f4f4;white-space:nowrap;font-weight:normal;-webkit-text-stroke:0.25px #f4f4f4">80</div>
<div style="position:absolute;left:727.7px;top:175.3px;font-size:10.5px;line-height:10px;letter-spacing:0.6px;color:#f4f4f4;white-space:nowrap;font-weight:normal;-webkit-text-stroke:0.25px #f4f4f4">100</div>
<div style="position:absolute;left:780.9px;top:175.3px;font-size:10.5px;line-height:10px;letter-spacing:0.6px;color:#f4f4f4;white-space:nowrap;font-weight:normal;-webkit-text-stroke:0.25px #f4f4f4">120</div>
<div style="position:absolute;left:834.0px;top:175.3px;font-size:10.5px;line-height:10px;letter-spacing:0.6px;color:#f4f4f4;white-space:nowrap;font-weight:normal;-webkit-text-stroke:0.25px #f4f4f4">140</div>
<div style="position:absolute;left:887.2px;top:175.3px;font-size:10.5px;line-height:10px;letter-spacing:0.6px;color:#f4f4f4;white-space:nowrap;font-weight:normal;-webkit-text-stroke:0.25px #f4f4f4">160</div>
<div style="position:absolute;left:940.3px;top:175.3px;font-size:10.5px;line-height:10px;letter-spacing:0.6px;color:#f4f4f4;white-space:nowrap;font-weight:normal;-webkit-text-stroke:0.25px #f4f4f4">180</div>
<div style="position:absolute;left:993.5px;top:175.3px;font-size:10.5px;line-height:10px;letter-spacing:0.6px;color:#f4f4f4;white-space:nowrap;font-weight:normal;-webkit-text-stroke:0.25px #f4f4f4">200</div>
<div style="position:absolute;left:1046.7px;top:175.3px;font-size:10.5px;line-height:10px;letter-spacing:0.6px;color:#f4f4f4;white-space:nowrap;font-weight:normal;-webkit-text-stroke:0.25px #f4f4f4">220</div>
<div style="position:absolute;left:1099.8px;top:175.3px;font-size:10.5px;line-height:10px;letter-spacing:0.6px;color:#f4f4f4;white-space:nowrap;font-weight:normal;-webkit-text-stroke:0.25px #f4f4f4">240</div>
<div style="position:absolute;left:77px;top:174px;width:16px;height:15px;background:#1e1f1e;border-right:1px solid #8a8a8a"></div>
<svg style="position:absolute;left:77px;top:174px;" width="15" height="15" viewBox="0 0 15 15"><path d="M0 5 H15" stroke="#b8b8b8" stroke-dasharray="1 1.3"/><path d="M4.5 0 V15" stroke="#b8b8b8" stroke-dasharray="1 1.3"/></svg>
<svg style="position:absolute;left:77px;top:189px;" width="16" height="828" viewBox="0 0 16 828"><rect x="0" y="0" width="16" height="828" fill="#1e1f1e"/><rect x="14" y="-0.12" width="2" height="1" fill="#7a7a7a"/><rect x="14" y="5.25" width="2" height="1" fill="#7a7a7a"/><rect x="14" y="10.63" width="2" height="1" fill="#7a7a7a"/><rect x="0" y="16.00" width="16" height="1" fill="#7a7a7a"/><rect x="14" y="21.37" width="2" height="1" fill="#7a7a7a"/><rect x="14" y="26.75" width="2" height="1" fill="#7a7a7a"/><rect x="14" y="32.12" width="2" height="1" fill="#7a7a7a"/><rect x="14" y="37.50" width="2" height="1" fill="#7a7a7a"/><rect x="10" y="42.87" width="6" height="1" fill="#7a7a7a"/><rect x="14" y="48.24" width="2" height="1" fill="#7a7a7a"/><rect x="14" y="53.62" width="2" height="1" fill="#7a7a7a"/><rect x="14" y="58.99" width="2" height="1" fill="#7a7a7a"/><rect x="14" y="64.37" width="2" height="1" fill="#7a7a7a"/><rect x="0" y="69.74" width="16" height="1" fill="#7a7a7a"/><rect x="14" y="75.11" width="2" height="1" fill="#7a7a7a"/><rect x="14" y="80.49" width="2" height="1" fill="#7a7a7a"/><rect x="14" y="85.86" width="2" height="1" fill="#7a7a7a"/><rect x="14" y="91.24" width="2" height="1" fill="#7a7a7a"/><rect x="10" y="96.61" width="6" height="1" fill="#7a7a7a"/><rect x="14" y="101.98" width="2" height="1" fill="#7a7a7a"/><rect x="14" y="107.36" width="2" height="1" fill="#7a7a7a"/><rect x="14" y="112.73" width="2" height="1" fill="#7a7a7a"/><rect x="14" y="118.11" width="2" height="1" fill="#7a7a7a"/><rect x="0" y="123.48" width="16" height="1" fill="#7a7a7a"/><rect x="14" y="128.85" width="2" height="1" fill="#7a7a7a"/><rect x="14" y="134.23" width="2" height="1" fill="#7a7a7a"/><rect x="14" y="139.60" width="2" height="1" fill="#7a7a7a"/><rect x="14" y="144.98" width="2" height="1" fill="#7a7a7a"/><rect x="10" y="150.35" width="6" height="1" fill="#7a7a7a"/><rect x="14" y="155.72" width="2" height="1" fill="#7a7a7a"/><rect x="14" y="161.10" width="2" height="1" fill="#7a7a7a"/><rect x="14" y="166.47" width="2" height="1" fill="#7a7a7a"/><rect x="14" y="171.85" width="2" height="1" fill="#7a7a7a"/><rect x="0" y="177.22" width="16" height="1" fill="#7a7a7a"/><rect x="14" y="182.59" width="2" height="1" fill="#7a7a7a"/><rect x="14" y="187.97" width="2" height="1" fill="#7a7a7a"/><rect x="14" y="193.34" width="2" height="1" fill="#7a7a7a"/><rect x="14" y="198.72" width="2" height="1" fill="#7a7a7a"/><rect x="10" y="204.09" width="6" height="1" fill="#7a7a7a"/><rect x="14" y="209.46" width="2" height="1" fill="#7a7a7a"/><rect x="14" y="214.84" width="2" height="1" fill="#7a7a7a"/><rect x="14" y="220.21" width="2" height="1" fill="#7a7a7a"/><rect x="14" y="225.59" width="2" height="1" fill="#7a7a7a"/><rect x="0" y="230.96" width="16" height="1" fill="#7a7a7a"/><rect x="14" y="236.33" width="2" height="1" fill="#7a7a7a"/><rect x="14" y="241.71" width="2" height="1" fill="#7a7a7a"/><rect x="14" y="247.08" width="2" height="1" fill="#7a7a7a"/><rect x="14" y="252.46" width="2" height="1" fill="#7a7a7a"/><rect x="10" y="257.83" width="6" height="1" fill="#7a7a7a"/><rect x="14" y="263.20" width="2" height="1" fill="#7a7a7a"/><rect x="14" y="268.58" width="2" height="1" fill="#7a7a7a"/><rect x="14" y="273.95" width="2" height="1" fill="#7a7a7a"/><rect x="14" y="279.33" width="2" height="1" fill="#7a7a7a"/><rect x="0" y="284.70" width="16" height="1" fill="#7a7a7a"/><rect x="14" y="290.07" width="2" height="1" fill="#7a7a7a"/><rect x="14" y="295.45" width="2" height="1" fill="#7a7a7a"/><rect x="14" y="300.82" width="2" height="1" fill="#7a7a7a"/><rect x="14" y="306.20" width="2" height="1" fill="#7a7a7a"/><rect x="10" y="311.57" width="6" height="1" fill="#7a7a7a"/><rect x="14" y="316.94" width="2" height="1" fill="#7a7a7a"/><rect x="14" y="322.32" width="2" height="1" fill="#7a7a7a"/><rect x="14" y="327.69" width="2" height="1" fill="#7a7a7a"/><rect x="14" y="333.07" width="2" height="1" fill="#7a7a7a"/><rect x="0" y="338.44" width="16" height="1" fill="#7a7a7a"/><rect x="14" y="343.81" width="2" height="1" fill="#7a7a7a"/><rect x="14" y="349.19" width="2" height="1" fill="#7a7a7a"/><rect x="14" y="354.56" width="2" height="1" fill="#7a7a7a"/><rect x="14" y="359.94" width="2" height="1" fill="#7a7a7a"/><rect x="10" y="365.31" width="6" height="1" fill="#7a7a7a"/><rect x="14" y="370.68" width="2" height="1" fill="#7a7a7a"/><rect x="14" y="376.06" width="2" height="1" fill="#7a7a7a"/><rect x="14" y="381.43" width="2" height="1" fill="#7a7a7a"/><rect x="14" y="386.81" width="2" height="1" fill="#7a7a7a"/><rect x="0" y="392.18" width="16" height="1" fill="#7a7a7a"/><rect x="14" y="397.55" width="2" height="1" fill="#7a7a7a"/><rect x="14" y="402.93" width="2" height="1" fill="#7a7a7a"/><rect x="14" y="408.30" width="2" height="1" fill="#7a7a7a"/><rect x="14" y="413.68" width="2" height="1" fill="#7a7a7a"/><rect x="10" y="419.05" width="6" height="1" fill="#7a7a7a"/><rect x="14" y="424.42" width="2" height="1" fill="#7a7a7a"/><rect x="14" y="429.80" width="2" height="1" fill="#7a7a7a"/><rect x="14" y="435.17" width="2" height="1" fill="#7a7a7a"/><rect x="14" y="440.55" width="2" height="1" fill="#7a7a7a"/><rect x="0" y="445.92" width="16" height="1" fill="#7a7a7a"/><rect x="14" y="451.29" width="2" height="1" fill="#7a7a7a"/><rect x="14" y="456.67" width="2" height="1" fill="#7a7a7a"/><rect x="14" y="462.04" width="2" height="1" fill="#7a7a7a"/><rect x="14" y="467.42" width="2" height="1" fill="#7a7a7a"/><rect x="10" y="472.79" width="6" height="1" fill="#7a7a7a"/><rect x="14" y="478.16" width="2" height="1" fill="#7a7a7a"/><rect x="14" y="483.54" width="2" height="1" fill="#7a7a7a"/><rect x="14" y="488.91" width="2" height="1" fill="#7a7a7a"/><rect x="14" y="494.29" width="2" height="1" fill="#7a7a7a"/><rect x="0" y="499.66" width="16" height="1" fill="#7a7a7a"/><rect x="14" y="505.03" width="2" height="1" fill="#7a7a7a"/><rect x="14" y="510.41" width="2" height="1" fill="#7a7a7a"/><rect x="14" y="515.78" width="2" height="1" fill="#7a7a7a"/><rect x="14" y="521.16" width="2" height="1" fill="#7a7a7a"/><rect x="10" y="526.53" width="6" height="1" fill="#7a7a7a"/><rect x="14" y="531.90" width="2" height="1" fill="#7a7a7a"/><rect x="14" y="537.28" width="2" height="1" fill="#7a7a7a"/><rect x="14" y="542.65" width="2" height="1" fill="#7a7a7a"/><rect x="14" y="548.03" width="2" height="1" fill="#7a7a7a"/><rect x="0" y="553.40" width="16" height="1" fill="#7a7a7a"/><rect x="14" y="558.77" width="2" height="1" fill="#7a7a7a"/><rect x="14" y="564.15" width="2" height="1" fill="#7a7a7a"/><rect x="14" y="569.52" width="2" height="1" fill="#7a7a7a"/><rect x="14" y="574.90" width="2" height="1" fill="#7a7a7a"/><rect x="10" y="580.27" width="6" height="1" fill="#7a7a7a"/><rect x="14" y="585.64" width="2" height="1" fill="#7a7a7a"/><rect x="14" y="591.02" width="2" height="1" fill="#7a7a7a"/><rect x="14" y="596.39" width="2" height="1" fill="#7a7a7a"/><rect x="14" y="601.77" width="2" height="1" fill="#7a7a7a"/><rect x="0" y="607.14" width="16" height="1" fill="#7a7a7a"/><rect x="14" y="612.51" width="2" height="1" fill="#7a7a7a"/><rect x="14" y="617.89" width="2" height="1" fill="#7a7a7a"/><rect x="14" y="623.26" width="2" height="1" fill="#7a7a7a"/><rect x="14" y="628.64" width="2" height="1" fill="#7a7a7a"/><rect x="10" y="634.01" width="6" height="1" fill="#7a7a7a"/><rect x="14" y="639.38" width="2" height="1" fill="#7a7a7a"/><rect x="14" y="644.76" width="2" height="1" fill="#7a7a7a"/><rect x="14" y="650.13" width="2" height="1" fill="#7a7a7a"/><rect x="14" y="655.51" width="2" height="1" fill="#7a7a7a"/><rect x="0" y="660.88" width="16" height="1" fill="#7a7a7a"/><rect x="14" y="666.25" width="2" height="1" fill="#7a7a7a"/><rect x="14" y="671.63" width="2" height="1" fill="#7a7a7a"/><rect x="14" y="677.00" width="2" height="1" fill="#7a7a7a"/><rect x="14" y="682.38" width="2" height="1" fill="#7a7a7a"/><rect x="10" y="687.75" width="6" height="1" fill="#7a7a7a"/><rect x="14" y="693.12" width="2" height="1" fill="#7a7a7a"/><rect x="14" y="698.50" width="2" height="1" fill="#7a7a7a"/><rect x="14" y="703.87" width="2" height="1" fill="#7a7a7a"/><rect x="14" y="709.25" width="2" height="1" fill="#7a7a7a"/><rect x="0" y="714.62" width="16" height="1" fill="#7a7a7a"/><rect x="14" y="719.99" width="2" height="1" fill="#7a7a7a"/><rect x="14" y="725.37" width="2" height="1" fill="#7a7a7a"/><rect x="14" y="730.74" width="2" height="1" fill="#7a7a7a"/><rect x="14" y="736.12" width="2" height="1" fill="#7a7a7a"/><rect x="10" y="741.49" width="6" height="1" fill="#7a7a7a"/><rect x="14" y="746.86" width="2" height="1" fill="#7a7a7a"/><rect x="14" y="752.24" width="2" height="1" fill="#7a7a7a"/><rect x="14" y="757.61" width="2" height="1" fill="#7a7a7a"/><rect x="14" y="762.99" width="2" height="1" fill="#7a7a7a"/><rect x="0" y="768.36" width="16" height="1" fill="#7a7a7a"/><rect x="14" y="773.73" width="2" height="1" fill="#7a7a7a"/><rect x="14" y="779.11" width="2" height="1" fill="#7a7a7a"/><rect x="14" y="784.48" width="2" height="1" fill="#7a7a7a"/><rect x="14" y="789.86" width="2" height="1" fill="#7a7a7a"/><rect x="10" y="795.23" width="6" height="1" fill="#7a7a7a"/><rect x="14" y="800.60" width="2" height="1" fill="#7a7a7a"/><rect x="14" y="805.98" width="2" height="1" fill="#7a7a7a"/><rect x="14" y="811.35" width="2" height="1" fill="#7a7a7a"/><rect x="14" y="816.73" width="2" height="1" fill="#7a7a7a"/><rect x="0" y="822.10" width="16" height="1" fill="#7a7a7a"/><rect x="14" y="827.47" width="2" height="1" fill="#7a7a7a"/><path d="M1 697.6 H16" stroke="#cfcfcf" stroke-dasharray="1 1"/></svg>
<div style="position:absolute;left:78px;top:208.5px;font-size:10.5px;line-height:9.75px;color:#f4f4f4;white-space:nowrap;width:9px;text-align:center;font-weight:normal;-webkit-text-stroke:0.25px #f4f4f4;height:40.0px;overflow:hidden">0</div>
<div style="position:absolute;left:78px;top:262.2px;font-size:10.5px;line-height:9.75px;color:#f4f4f4;white-space:nowrap;width:9px;text-align:center;font-weight:normal;-webkit-text-stroke:0.25px #f4f4f4;height:40.0px;overflow:hidden">2<br>0</div>
<div style="position:absolute;left:78px;top:316.0px;font-size:10.5px;line-height:9.75px;color:#f4f4f4;white-space:nowrap;width:9px;text-align:center;font-weight:normal;-webkit-text-stroke:0.25px #f4f4f4;height:40.0px;overflow:hidden">4<br>0</div>
<div style="position:absolute;left:78px;top:369.7px;font-size:10.5px;line-height:9.75px;color:#f4f4f4;white-space:nowrap;width:9px;text-align:center;font-weight:normal;-webkit-text-stroke:0.25px #f4f4f4;height:40.0px;overflow:hidden">6<br>0</div>
<div style="position:absolute;left:78px;top:423.5px;font-size:10.5px;line-height:9.75px;color:#f4f4f4;white-space:nowrap;width:9px;text-align:center;font-weight:normal;-webkit-text-stroke:0.25px #f4f4f4;height:40.0px;overflow:hidden">8<br>0</div>
<div style="position:absolute;left:78px;top:477.2px;font-size:10.5px;line-height:9.75px;color:#f4f4f4;white-space:nowrap;width:9px;text-align:center;font-weight:normal;-webkit-text-stroke:0.25px #f4f4f4;height:40.0px;overflow:hidden">1<br>0<br>0</div>
<div style="position:absolute;left:78px;top:530.9px;font-size:10.5px;line-height:9.75px;color:#f4f4f4;white-space:nowrap;width:9px;text-align:center;font-weight:normal;-webkit-text-stroke:0.25px #f4f4f4;height:40.0px;overflow:hidden">1<br>2<br>0</div>
<div style="position:absolute;left:78px;top:584.7px;font-size:10.5px;line-height:9.75px;color:#f4f4f4;white-space:nowrap;width:9px;text-align:center;font-weight:normal;-webkit-text-stroke:0.25px #f4f4f4;height:40.0px;overflow:hidden">1<br>4<br>0</div>
<div style="position:absolute;left:78px;top:638.4px;font-size:10.5px;line-height:9.75px;color:#f4f4f4;white-space:nowrap;width:9px;text-align:center;font-weight:normal;-webkit-text-stroke:0.25px #f4f4f4;height:40.0px;overflow:hidden">1<br>6<br>0</div>
<div style="position:absolute;left:78px;top:692.2px;font-size:10.5px;line-height:9.75px;color:#f4f4f4;white-space:nowrap;width:9px;text-align:center;font-weight:normal;-webkit-text-stroke:0.25px #f4f4f4;height:40.0px;overflow:hidden">1<br>8<br>0</div>
<div style="position:absolute;left:78px;top:745.9px;font-size:10.5px;line-height:9.75px;color:#f4f4f4;white-space:nowrap;width:9px;text-align:center;font-weight:normal;-webkit-text-stroke:0.25px #f4f4f4;height:40.0px;overflow:hidden">2<br>0<br>0</div>
<div style="position:absolute;left:78px;top:799.6px;font-size:10.5px;line-height:9.75px;color:#f4f4f4;white-space:nowrap;width:9px;text-align:center;font-weight:normal;-webkit-text-stroke:0.25px #f4f4f4;height:40.0px;overflow:hidden">2<br>2<br>0</div>
<div style="position:absolute;left:78px;top:853.4px;font-size:10.5px;line-height:9.75px;color:#f4f4f4;white-space:nowrap;width:9px;text-align:center;font-weight:normal;-webkit-text-stroke:0.25px #f4f4f4;height:40.0px;overflow:hidden">2<br>4<br>0</div>
<div style="position:absolute;left:78px;top:907.1px;font-size:10.5px;line-height:9.75px;color:#f4f4f4;white-space:nowrap;width:9px;text-align:center;font-weight:normal;-webkit-text-stroke:0.25px #f4f4f4;height:40.0px;overflow:hidden">2<br>6<br>0</div>
<div style="position:absolute;left:78px;top:960.9px;font-size:10.5px;line-height:9.75px;color:#f4f4f4;white-space:nowrap;width:9px;text-align:center;font-weight:normal;-webkit-text-stroke:0.25px #f4f4f4;height:40.0px;overflow:hidden">2<br>8<br>0</div>
<div style="position:absolute;left:78px;top:1014.6px;font-size:10.5px;line-height:9.75px;color:#f4f4f4;white-space:nowrap;width:9px;text-align:center;font-weight:normal;-webkit-text-stroke:0.25px #f4f4f4;height:2.4px;overflow:hidden">3<br>0<br>0</div>
<div style="position:absolute;left:451px;top:197px;width:575px;height:816px;border:1px solid #c45563"></div>
<div style="position:absolute;left:462px;top:207.5px;width:558px;height:798px;background:#000"></div>
<div style="position:absolute;left:460px;top:205.5px;width:558px;height:798px;background:#fff"></div>
<svg style="position:absolute;left:0;top:0" width="1575" height="1034"><path d="M493.5 240.5 H984.5 M493.5 969.5 H984.5" stroke="#e2b6dc" stroke-width="1"/><path d="M493.5 240.5 V969.5 M984.5 240.5 V969.5 M649.5 240.5 V969.5 M660.5 240.5 V969.5 M816.5 240.5 V969.5 M827.5 240.5 V969.5" stroke="#c6c2e6" stroke-width="1"/></svg>
<div style="position:absolute;left:77px;top:1017px;width:1325px;height:17px;background:#525252"></div>
<div style="position:absolute;left:653px;top:1017px;width:708px;height:17px;background:#474747"></div>
<div style="position:absolute;left:1361px;top:1017px;width:40px;height:17px;background:#525252"></div>
<div style="position:absolute;left:716px;top:1018px;width:406px;height:16px;background:#6c6c6c;border-radius:8px"></div>
<div style="position:absolute;left:92px;top:1020.5px;font-size:10.8px;line-height:10.8px;color:#e0e0e0;font-weight:normal;white-space:nowrap;">50.82%</div>
<svg style="position:absolute;left:136px;top:1023.5px;" width="9" height="5" viewBox="0 0 9 5"><path d="M1 0.8 L4.5 4 L8 0.8" stroke="#d0d0d0" stroke-width="1.1" fill="none"/></svg>
<svg style="position:absolute;left:157px;top:1020px;" width="10" height="10" viewBox="0 0 10 10"><path d="M1 1 V9" stroke="#9a9a9a" stroke-width="1.3"/><path d="M9 1 L3 5 L9 9 Z" fill="#9a9a9a"/></svg>
<svg style="position:absolute;left:180px;top:1021px;" width="6" height="9" viewBox="0 0 6 9"><path d="M6 0 L0 4.5 L6 9 Z" fill="#9a9a9a"/></svg>
<div style="position:absolute;left:199px;top:1017px;width:94px;height:17px;background:#474747;border:1px solid #5f5f5f;border-radius:2px"></div>
<div style="position:absolute;left:274px;top:1018px;width:1px;height:15px;background:#5f5f5f"></div>
<div style="position:absolute;left:203px;top:1020px;font-size:12px;line-height:12px;color:#e8e8e8;font-weight:normal;white-space:nowrap;">6</div>
<svg style="position:absolute;left:278px;top:1023.5px;" width="9" height="5" viewBox="0 0 9 5"><path d="M1 0.8 L4.5 4 L8 0.8" stroke="#d0d0d0" stroke-width="1.1" fill="none"/></svg>
<svg style="position:absolute;left:305px;top:1021px;" width="6" height="9" viewBox="0 0 6 9"><path d="M0 0 L6 4.5 L0 9 Z" fill="#777"/></svg>
<svg style="position:absolute;left:325px;top:1020px;" width="10" height="10" viewBox="0 0 10 10"><path d="M9 1 V9" stroke="#777" stroke-width="1.3"/><path d="M1 1 L7 5 L1 9 Z" fill="#777"/></svg>
<svg style="position:absolute;left:351px;top:1017.5px;" width="20" height="15" viewBox="0 0 20 15"><circle cx="7.5" cy="7.3" r="5.5" fill="#4e4e4e" stroke="#c8c8c8" stroke-width="2.4" stroke-dasharray="29 5.5" transform="rotate(115 7.5 7.3)"/><path d="M4.5 13 V4.5 H8" stroke="#c8c8c8" stroke-width="0.8" fill="none"/><path d="M8.5 5 L10.5 7" stroke="#c8c8c8" stroke-width="1.5"/><path d="M16 11.5 L19 11.5 L17.5 13 Z" fill="#d0d0d0"/></svg>
<div style="position:absolute;left:386px;top:1020px;font-size:11px;line-height:11px;color:#dcdcdc;font-weight:normal;white-space:nowrap;">[基本]（工作）</div>
<svg style="position:absolute;left:492px;top:1023.5px;" width="9" height="5" viewBox="0 0 9 5"><path d="M1 0.8 L4.5 4 L8 0.8" stroke="#d0d0d0" stroke-width="1.1" fill="none"/></svg>
<div style="position:absolute;left:516.5px;top:1020.5px;width:10px;height:10px;background:#31a33a;border-radius:50%"></div>
<div style="position:absolute;left:533px;top:1020px;font-size:11px;line-height:11px;color:#dcdcdc;font-weight:normal;white-space:nowrap;">无错误</div>
<svg style="position:absolute;left:639px;top:1023.5px;" width="9" height="5" viewBox="0 0 9 5"><path d="M1 0.8 L4.5 4 L8 0.8" stroke="#d0d0d0" stroke-width="1.1" fill="none"/></svg>
<svg style="position:absolute;left:1366px;top:1020px;" width="16" height="12" viewBox="0 0 16 12"><rect x="0.7" y="0.7" width="14.6" height="10.6" rx="1" fill="none" stroke="#d8d8d8" stroke-width="1.3"/><path d="M8 1 V11" stroke="#b8b8b8" stroke-width="1.3"/></svg>
<svg style="position:absolute;left:1388px;top:1021px;" width="10" height="10" viewBox="0 0 10 10"><rect x="9" y="9" width="1" height="1" fill="#8a8a8a"/><rect x="9" y="7" width="1" height="1" fill="#8a8a8a"/><rect x="7" y="7" width="1" height="1" fill="#8a8a8a"/><rect x="9" y="5" width="1" height="1" fill="#8a8a8a"/><rect x="7" y="5" width="1" height="1" fill="#8a8a8a"/><rect x="5" y="5" width="1" height="1" fill="#8a8a8a"/><rect x="9" y="3" width="1" height="1" fill="#8a8a8a"/><rect x="7" y="3" width="1" height="1" fill="#8a8a8a"/><rect x="5" y="3" width="1" height="1" fill="#8a8a8a"/><rect x="3" y="3" width="1" height="1" fill="#8a8a8a"/><rect x="9" y="1" width="1" height="1" fill="#8a8a8a"/><rect x="7" y="1" width="1" height="1" fill="#8a8a8a"/><rect x="5" y="1" width="1" height="1" fill="#8a8a8a"/><rect x="3" y="1" width="1" height="1" fill="#8a8a8a"/><rect x="1" y="1" width="1" height="1" fill="#8a8a8a"/></svg>
<div style="position:absolute;left:1385px;top:708px;width:15px;height:309px;background:#4b4b4b"></div>
<div style="position:absolute;left:1386px;top:821px;width:14px;height:176px;background:#6b6b6b;border-radius:7px"></div>
<div style="position:absolute;left:1401px;top:144px;width:2px;height:890px;background:#3c3c3c"></div>
<div style="position:absolute;left:1150px;top:152px;width:251px;height:556px;background:#535353;box-shadow:-1px 0 0 #3a3a3a"></div>
<div style="position:absolute;left:1150px;top:152px;width:251px;height:5px;background:#3b3b3b"></div>
<div style="position:absolute;left:1150px;top:157px;width:251px;height:28px;background:#474747"></div>
<div style="position:absolute;left:1150px;top:157px;width:56px;height:28px;background:#535353"></div>
<div style="position:absolute;left:1206px;top:157px;width:1px;height:28px;background:#414141"></div>
<div style="position:absolute;left:1255px;top:157px;width:1px;height:28px;background:#414141"></div>
<div style="position:absolute;left:1305px;top:157px;width:1px;height:28px;background:#414141"></div>
<svg style="position:absolute;left:1159px;top:166px;" width="6" height="10" viewBox="0 0 6 10"><path d="M0.5 3.5 L3 1 L5.5 3.5 M0.5 6.5 L3 9 L5.5 6.5" stroke="#d0d0d0" fill="none"/></svg>
<div style="position:absolute;left:1170px;top:165.5px;font-size:12px;line-height:12px;color:#efefef;font-weight:normal;white-space:nowrap;">页面</div>
<div style="position:absolute;left:1219px;top:165.5px;font-size:12px;line-height:12px;color:#b4b4b4;font-weight:normal;white-space:nowrap;">图层</div>
<div style="position:absolute;left:1269px;top:165.5px;font-size:12px;line-height:12px;color:#b4b4b4;font-weight:normal;white-space:nowrap;">链接</div>
<svg style="position:absolute;left:1359px;top:167px;" width="11" height="9" viewBox="0 0 11 9"><path d="M1 1 L4.5 4.5 L1 8 M6 1 L9.5 4.5 L6 8" stroke="#d0d0d0" stroke-width="1.2" fill="none"/></svg>
<div style="position:absolute;left:1376px;top:165px;width:1px;height:11px;background:#c0c0c0"></div>
<svg style="position:absolute;left:1384px;top:167px;" width="12" height="9" viewBox="0 0 12 9"><path d="M0 0.75 H12 M0 3.25 H12 M0 5.75 H12 M0 8.25 H12" stroke="#c8c8c8" stroke-width="1"/></svg>
<div style="position:absolute;left:1154px;top:193px;font-size:14px;line-height:14px;color:#efefef;font-weight:normal;white-space:nowrap;">[无]</div>
<div style="position:absolute;left:1360px;top:189px;width:18px;height:26px;background:#fff"></div>
<div style="position:absolute;left:1154px;top:223.5px;font-size:14px;line-height:14px;color:#efefef;font-weight:normal;white-space:nowrap;">A–主页</div>
<div style="position:absolute;left:1343px;top:221px;width:35px;height:25px;background:#fff"></div>
<div style="position:absolute;left:1360px;top:221px;width:1px;height:25px;background:#bbb"></div>
<div style="position:absolute;left:1150px;top:251px;width:251px;height:2px;background:#616161"></div>
<div style="position:absolute;left:1268px;top:257px;width:1px;height:48px;background:#bdbdbd"></div>
<svg style="position:absolute;left:1277px;top:257px;" width="10" height="6" viewBox="0 0 10 6"><path d="M0 0 L10 0 L5 5 Z" fill="#bdbdbd"/></svg>
<div style="position:absolute;left:1269px;top:263px;width:26px;height:38px;background:#fff;box-shadow:0 1px 0 #aaa"></div>
<div style="position:absolute;left:1284.7px;top:265.2px;font-size:13.5px;line-height:13.5px;color:#000;font-weight:normal;white-space:nowrap;text-shadow:0 0 0.3px #000">A</div>
<div style="position:absolute;left:1277px;top:308.5px;font-size:13.5px;line-height:13.5px;color:#efefef;font-weight:normal;white-space:nowrap;">1</div>
<div style="position:absolute;left:1243px;top:331px;width:52px;height:37px;background:#fff;box-shadow:0 1px 0 #aaa"></div>
<div style="position:absolute;left:1268px;top:324px;width:1px;height:53px;background:#bdbdbd"></div>
<div style="position:absolute;left:1243.2px;top:333.2px;font-size:13.5px;line-height:13.5px;color:#000;font-weight:normal;white-space:nowrap;text-shadow:0 0 0.3px #000">A</div>
<div style="position:absolute;left:1284.7px;top:333.2px;font-size:13.5px;line-height:13.5px;color:#000;font-weight:normal;white-space:nowrap;text-shadow:0 0 0.3px #000">A</div>
<div style="position:absolute;left:1255.5px;top:376.5px;font-size:13.5px;line-height:13.5px;color:#efefef;font-weight:normal;white-space:nowrap;">2–3</div>
<div style="position:absolute;left:1243px;top:399px;width:52px;height:36px;background:#fff;box-shadow:0 1px 0 #aaa"></div>
<div style="position:absolute;left:1268px;top:392px;width:1px;height:49px;background:#bdbdbd"></div>
<div style="position:absolute;left:1243.2px;top:400.2px;font-size:13.5px;line-height:13.5px;color:#000;font-weight:normal;white-space:nowrap;text-shadow:0 0 0.3px #000">A</div>
<div style="position:absolute;left:1284.7px;top:400.2px;font-size:13.5px;line-height:13.5px;color:#000;font-weight:normal;white-space:nowrap;text-shadow:0 0 0.3px #000">A</div>
<div style="position:absolute;left:1255.5px;top:444px;font-size:13.5px;line-height:13.5px;color:#efefef;font-weight:normal;white-space:nowrap;">4–5</div>
<div style="position:absolute;left:1243px;top:466px;width:25px;height:37px;background:#8cbfea;box-shadow:0 1px 0 #7a9ab8"></div>
<div style="position:absolute;left:1243px;top:466px;width:10px;height:14px;background:#fff"></div>
<div style="position:absolute;left:1243.2px;top:467.2px;font-size:13.5px;line-height:13.5px;color:#000;font-weight:normal;white-space:nowrap;text-shadow:0 0 0.3px #000">A</div>
<div style="position:absolute;left:1268px;top:460px;width:1px;height:48px;background:#bdbdbd"></div>
<div style="position:absolute;left:1247px;top:508px;width:14px;height:15px;background:#1a7dcc"></div>
<div style="position:absolute;left:1251px;top:509.5px;font-size:13.5px;line-height:13.5px;color:#ffffff;font-weight:normal;white-space:nowrap;">6</div>
<div style="position:absolute;left:1150px;top:673px;width:251px;height:1px;background:#4c4c4c"></div>
<div style="position:absolute;left:1157px;top:680.5px;font-size:13.5px;line-height:13.5px;color:#ececec;font-weight:normal;white-space:nowrap;letter-spacing:0.15px">6 页，4 个跨页</div>
<svg style="position:absolute;left:1302px;top:680.5px;" width="20" height="13" viewBox="0 0 20 13"><path d="M0.6 6 H8 V12 H0.6 Z" stroke="#cfcfcf" stroke-width="1.1" fill="none"/><path d="M6 6 V1.5 Q6 0.6 7 0.6 H11 L14.5 4 V12 H8" stroke="#cfcfcf" stroke-width="1.1" fill="none"/><path d="M9.5 4 A2.8 2.8 0 0 1 12 7.5" stroke="#cfcfcf" stroke-width="1" fill="none"/><path d="M17.5 11 L19.5 11 L18.5 12 Z" fill="#cfcfcf"/></svg>
<svg style="position:absolute;left:1336px;top:681px;" width="12" height="12" viewBox="0 0 12 12"><rect x="0.5" y="0.5" width="11" height="11" fill="none" stroke="#cfcfcf"/><path d="M6 3 V9 M3 6 H9" stroke="#cfcfcf" stroke-width="1.1"/></svg>
<svg style="position:absolute;left:1364px;top:680px;" width="12" height="13" viewBox="0 0 12 13"><path d="M0 2.8 H12 M4.2 2.8 V0.8 H7.8 V2.8" stroke="#cfcfcf" stroke-width="1.1" fill="none"/><path d="M1.6 3 V11.5 Q1.6 12.4 2.5 12.4 H9.5 Q10.4 12.4 10.4 11.5 V3" stroke="#cfcfcf" stroke-width="1.1" fill="none"/><path d="M4.3 5 V10.5 M6 5 V10.5 M7.7 5 V10.5" stroke="#cfcfcf" stroke-width="0.9"/></svg>
<div style="position:absolute;left:1150px;top:699px;width:251px;height:2px;background:#3a3a3a"></div>
<div style="position:absolute;left:1150px;top:701px;width:251px;height:8px;background:#545454;border-bottom:1px solid #383838"></div>
<div style="position:absolute;left:1265.0px;top:703px;width:1px;height:4px;background:#2e2e2e"></div>
<div style="position:absolute;left:1266.9px;top:703px;width:1px;height:4px;background:#2e2e2e"></div>
<div style="position:absolute;left:1268.8px;top:703px;width:1px;height:4px;background:#2e2e2e"></div>
<div style="position:absolute;left:1270.7px;top:703px;width:1px;height:4px;background:#2e2e2e"></div>
<div style="position:absolute;left:1272.6px;top:703px;width:1px;height:4px;background:#2e2e2e"></div>
<div style="position:absolute;left:1274.5px;top:703px;width:1px;height:4px;background:#2e2e2e"></div>
<div style="position:absolute;left:1276.4px;top:703px;width:1px;height:4px;background:#2e2e2e"></div>
<div style="position:absolute;left:1278.3px;top:703px;width:1px;height:4px;background:#2e2e2e"></div>
<div style="position:absolute;left:1280.2px;top:703px;width:1px;height:4px;background:#2e2e2e"></div>
<div style="position:absolute;left:1282.1px;top:703px;width:1px;height:4px;background:#2e2e2e"></div>
<div style="position:absolute;left:1284.0px;top:703px;width:1px;height:4px;background:#2e2e2e"></div>
<div style="position:absolute;left:1403px;top:144px;width:171px;height:890px;background:#535353"></div>
<div style="position:absolute;left:1403px;top:144px;width:171px;height:12px;background:#424242"></div>
<div style="position:absolute;left:1574px;top:52px;width:1px;height:982px;background:#2f2f2f"></div>
<svg style="position:absolute;left:1561px;top:146px;" width="8" height="6" viewBox="0 0 8 6"><path d="M3.5 0.5 L1 3 L3.5 5.5 M7 0.5 L4.5 3 L7 5.5" stroke="#cfcfcf" fill="none"/></svg>
<div style="position:absolute;left:1478.0px;top:159px;width:1px;height:4px;background:#2e2e2e"></div>
<div style="position:absolute;left:1479.85px;top:159px;width:1px;height:4px;background:#2e2e2e"></div>
<div style="position:absolute;left:1481.7px;top:159px;width:1px;height:4px;background:#2e2e2e"></div>
<div style="position:absolute;left:1483.55px;top:159px;width:1px;height:4px;background:#2e2e2e"></div>
<div style="position:absolute;left:1485.4px;top:159px;width:1px;height:4px;background:#2e2e2e"></div>
<div style="position:absolute;left:1487.25px;top:159px;width:1px;height:4px;background:#2e2e2e"></div>
<div style="position:absolute;left:1489.1px;top:159px;width:1px;height:4px;background:#2e2e2e"></div>
<div style="position:absolute;left:1490.95px;top:159px;width:1px;height:4px;background:#2e2e2e"></div>
<div style="position:absolute;left:1492.8px;top:159px;width:1px;height:4px;background:#2e2e2e"></div>
<div style="position:absolute;left:1494.65px;top:159px;width:1px;height:4px;background:#2e2e2e"></div>
<div style="position:absolute;left:1496.5px;top:159px;width:1px;height:4px;background:#2e2e2e"></div>
<div style="position:absolute;left:1408px;top:168px;width:161px;height:23px;background:#363636;border:1px solid #444;border-radius:4px"></div>
<div style="position:absolute;left:1442px;top:174.7px;font-size:12px;line-height:12px;color:#efefef;font-weight:normal;white-space:nowrap;">页面</div>
<div style="position:absolute;left:1442px;top:203.7px;font-size:12px;line-height:12px;color:#efefef;font-weight:normal;white-space:nowrap;">图层</div>
<div style="position:absolute;left:1442px;top:233.7px;font-size:12px;line-height:12px;color:#efefef;font-weight:normal;white-space:nowrap;">链接</div>
<div style="position:absolute;left:1442px;top:276.7px;font-size:12px;line-height:12px;color:#efefef;font-weight:normal;white-space:nowrap;">描边</div>
<div style="position:absolute;left:1442px;top:305.7px;font-size:12px;line-height:12px;color:#efefef;font-weight:normal;white-space:nowrap;">颜色</div>
<div style="position:absolute;left:1442px;top:349.7px;font-size:12px;line-height:12px;color:#efefef;font-weight:normal;white-space:nowrap;">色板</div>
<div style="position:absolute;left:1442px;top:378.7px;font-size:12.5px;line-height:12.5px;color:#efefef;font-weight:normal;white-space:nowrap;">CC Libraries</div>
<div style="position:absolute;left:1442px;top:407.7px;font-size:12px;line-height:12px;color:#efefef;font-weight:normal;white-space:nowrap;">对齐</div>
<div style="position:absolute;left:1442px;top:437.7px;font-size:12px;line-height:12px;color:#efefef;font-weight:normal;white-space:nowrap;">路径查找器</div>
<svg style="position:absolute;left:1414px;top:171px;" width="19" height="19" viewBox="0 0 19 19"><path d="M0.5 6 L4 2.5 H8.5 V15.5 H0.5 Z" fill="#d2d2d2"/><path d="M18.5 6 L15 2.5 H10.5 V15.5 H18.5 Z" fill="#d2d2d2"/><path d="M0.5 6 H4 V2.5" stroke="#535353" stroke-width="1" fill="none"/><path d="M18.5 6 H15 V2.5" stroke="#535353" stroke-width="1" fill="none"/><path d="M9.5 0 V19" stroke="#d2d2d2" stroke-width="1.1"/></svg>
<svg style="position:absolute;left:1415px;top:200px;" width="18" height="19" viewBox="0 0 18 19"><path d="M8.5 0.5 L17 6.5 L8.5 12.5 L0 6.5 Z" fill="#d2d2d2"/><path d="M0 12 L8.5 18 L17 12 L14.5 10.3 L8.5 14.5 L2.5 10.3 Z" fill="#d2d2d2"/></svg>
<svg style="position:absolute;left:1413px;top:234px;" width="21" height="11" viewBox="0 0 21 11"><rect x="1.1" y="1.1" width="11.5" height="8.6" rx="4.3" stroke="#d2d2d2" stroke-width="2.1" fill="none"/><rect x="8.4" y="1.1" width="11.5" height="8.6" rx="4.3" stroke="#d2d2d2" stroke-width="2.1" fill="none"/><path d="M12.6 2.5 V5" stroke="#535353" stroke-width="1.4"/><path d="M8.4 6 V8.5" stroke="#535353" stroke-width="1.4"/></svg>
<div style="position:absolute;left:1403px;top:257px;width:171px;height:1px;background:#474747"></div>
<div style="position:absolute;left:1478.0px;top:262px;width:1px;height:4px;background:#2e2e2e"></div>
<div style="position:absolute;left:1479.85px;top:262px;width:1px;height:4px;background:#2e2e2e"></div>
<div style="position:absolute;left:1481.7px;top:262px;width:1px;height:4px;background:#2e2e2e"></div>
<div style="position:absolute;left:1483.55px;top:262px;width:1px;height:4px;background:#2e2e2e"></div>
<div style="position:absolute;left:1485.4px;top:262px;width:1px;height:4px;background:#2e2e2e"></div>
<div style="position:absolute;left:1487.25px;top:262px;width:1px;height:4px;background:#2e2e2e"></div>
<div style="position:absolute;left:1489.1px;top:262px;width:1px;height:4px;background:#2e2e2e"></div>
<div style="position:absolute;left:1490.95px;top:262px;width:1px;height:4px;background:#2e2e2e"></div>
<div style="position:absolute;left:1492.8px;top:262px;width:1px;height:4px;background:#2e2e2e"></div>
<div style="position:absolute;left:1494.65px;top:262px;width:1px;height:4px;background:#2e2e2e"></div>
<div style="position:absolute;left:1496.5px;top:262px;width:1px;height:4px;background:#2e2e2e"></div>
<svg style="position:absolute;left:1414px;top:275px;" width="18" height="14" viewBox="0 0 18 14"><path d="M0 1 H18" stroke="#d2d2d2" stroke-width="1.2"/><path d="M0 6.5 H18" stroke="#d2d2d2" stroke-width="2"/><path d="M0 12 H18" stroke="#d2d2d2" stroke-width="3"/></svg>
<svg style="position:absolute;left:1413px;top:304px;" width="21" height="15" viewBox="0 0 21 15"><path d="M11 0.5 Q20.5 0.5 20.5 6 Q20.5 9 17.5 9 Q14.5 9 14.5 11.5 Q14.5 14.5 9.5 14.5 Q0.5 14.5 0.5 8.5 Q0.5 0.5 11 0.5 Z" fill="#d2d2d2"/><circle cx="4.5" cy="9" r="1.7" fill="#535353"/><circle cx="8.5" cy="11.5" r="1.7" fill="#535353"/><circle cx="12.5" cy="10.5" r="1.5" fill="#535353"/><circle cx="16.5" cy="4.5" r="1.6" fill="#535353"/></svg>
<div style="position:absolute;left:1403px;top:330px;width:171px;height:1px;background:#474747"></div>
<div style="position:absolute;left:1478.0px;top:335px;width:1px;height:4px;background:#2e2e2e"></div>
<div style="position:absolute;left:1479.85px;top:335px;width:1px;height:4px;background:#2e2e2e"></div>
<div style="position:absolute;left:1481.7px;top:335px;width:1px;height:4px;background:#2e2e2e"></div>
<div style="position:absolute;left:1483.55px;top:335px;width:1px;height:4px;background:#2e2e2e"></div>
<div style="position:absolute;left:1485.4px;top:335px;width:1px;height:4px;background:#2e2e2e"></div>
<div style="position:absolute;left:1487.25px;top:335px;width:1px;height:4px;background:#2e2e2e"></div>
<div style="position:absolute;left:1489.1px;top:335px;width:1px;height:4px;background:#2e2e2e"></div>
<div style="position:absolute;left:1490.95px;top:335px;width:1px;height:4px;background:#2e2e2e"></div>
<div style="position:absolute;left:1492.8px;top:335px;width:1px;height:4px;background:#2e2e2e"></div>
<div style="position:absolute;left:1494.65px;top:335px;width:1px;height:4px;background:#2e2e2e"></div>
<div style="position:absolute;left:1496.5px;top:335px;width:1px;height:4px;background:#2e2e2e"></div>
<svg style="position:absolute;left:1414px;top:349px;" width="18" height="13" viewBox="0 0 18 13"><rect x="0.5" y="0.5" width="17" height="12" fill="#d2d2d2"/><rect x="1.5" y="1.5" width="4.5" height="4.5" fill="#6e6e6e"/><rect x="12" y="1.5" width="4.5" height="4.5" fill="#6e6e6e"/><rect x="1.5" y="7" width="4.5" height="4.5" fill="#6e6e6e"/><rect x="6.75" y="7" width="4.5" height="4.5" fill="#6e6e6e"/><rect x="12" y="7" width="4.5" height="4.5" fill="#6e6e6e"/></svg>
<svg style="position:absolute;left:1415px;top:376px;" width="18" height="17" viewBox="0 0 18 17"><path d="M2.5 14 V3 Q2.5 0.75 4.5 0.75 H14 Q16 0.75 16 2.5" stroke="#d2d2d2" stroke-width="1" fill="none"/><path d="M0.75 13.5 V2.5 M0.75 13.5 Q0.75 15 2.5 15" stroke="#d2d2d2" stroke-width="1" fill="none"/><rect x="4.25" y="3.25" width="12.5" height="13" rx="1" fill="#535353" stroke="#d2d2d2" stroke-width="1.1"/><path d="M10.5 3.5 V9.5 L12.3 7.8 L14 9.5 V3.5 Z" fill="#d2d2d2"/></svg>
<svg style="position:absolute;left:1415px;top:404px;" width="17" height="20" viewBox="0 0 17 20"><path d="M1 0 V19.5" stroke="#d2d2d2" stroke-width="1.6"/><rect x="3" y="3" width="8" height="6" fill="#d2d2d2"/><rect x="3" y="12" width="13.5" height="5.5" fill="#d2d2d2"/></svg>
<svg style="position:absolute;left:1415px;top:435px;" width="17" height="17" viewBox="0 0 17 17"><rect x="0.5" y="0.5" width="10" height="10.5" fill="#d2d2d2"/><rect x="5.5" y="5.5" width="10.5" height="11" fill="#d2d2d2"/><path d="M5.5 5.5 H10.5 V11 H5.5 Z" fill="#7a7a7a"/><path d="M8 5.5 V11 M5.5 8.2 H10.5" stroke="#d2d2d2" stroke-width="0.8"/></svg>
<div style="position:absolute;left:1403px;top:461px;width:171px;height:1px;background:#474747"></div>
</body></html>
